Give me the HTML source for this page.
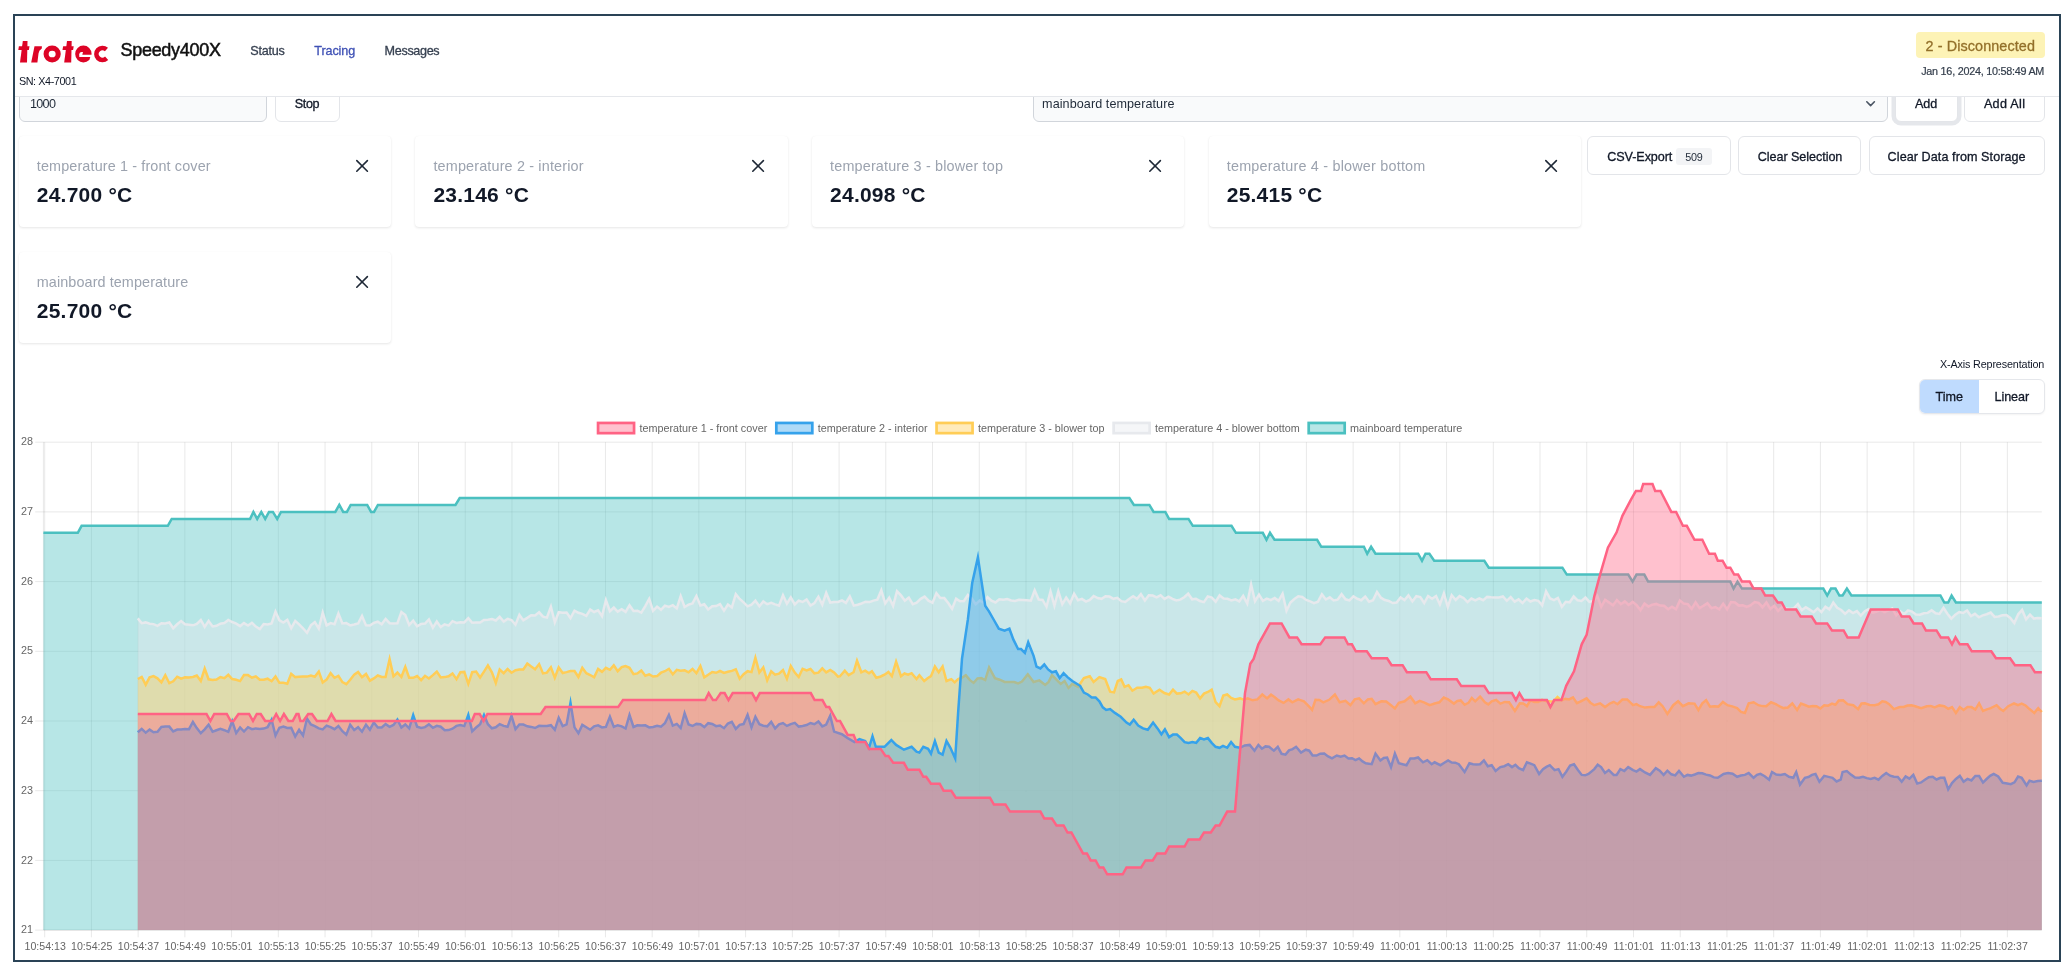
<!DOCTYPE html>
<html><head><meta charset="utf-8"><title>Speedy400X - Tracing</title>
<style>
html,body{margin:0;padding:0;background:#fff;}
body{width:2068px;height:966px;position:relative;overflow:hidden;font-family:"Liberation Sans",sans-serif;}
.t{position:absolute;white-space:nowrap;font-family:"Liberation Sans",sans-serif;}
#root{position:absolute;left:0;top:0;width:2068px;height:966px;will-change:transform;}
.abs{position:absolute;box-sizing:border-box;}
.frame{left:13px;top:14px;width:2048px;height:948px;border:2px solid #2a4356;}
.card{background:#fff;border-radius:4px;box-shadow:0 1px 2.5px rgba(0,0,0,0.10),0 0 1px rgba(0,0,0,0.05);}
.btn{background:#fff;border:1px solid #e3e5e9;border-radius:6px;}
.inp{background:#f9fafb;border:1px solid #d1d5db;border-radius:6px;}
</style></head><body><div id="root">
<div class="abs inp" style="left:18.5px;top:85px;width:248.5px;height:36.5px;"></div>
<div class="t" style="left:30.00px;top:91.53px;font-size:12.6px;line-height:25px;color:#1f2937;letter-spacing:-0.710px;">1000</div>
<div class="abs btn" style="left:275px;top:85px;width:64.5px;height:36.5px;"></div>
<div class="t" style="left:294.70px;top:91.53px;font-size:12.6px;line-height:25px;color:#111827;letter-spacing:-0.340px;-webkit-text-stroke:0.3px currentColor;">Stop</div>
<div class="abs inp" style="left:1032.5px;top:85px;width:855.5px;height:36.5px;"></div>
<div class="t" style="left:1042.10px;top:91.53px;font-size:12.6px;line-height:25px;color:#1f2937;letter-spacing:0.071px;">mainboard temperature</div>
<svg class="abs" style="left:1864px;top:99px" width="14" height="10" viewBox="0 0 14 10"><path d="M2.8 2.8 L6.6 6.6 L10.4 2.8" fill="none" stroke="#4b5563" stroke-width="1.6" stroke-linecap="round" stroke-linejoin="round"/></svg>
<div class="abs btn" style="left:1895px;top:85px;width:62.5px;height:36.5px;box-shadow:0 0 0 3.5px #e5e7eb;"></div>
<div class="t" style="left:1915.00px;top:91.53px;font-size:12.6px;line-height:25px;color:#111827;letter-spacing:-0.110px;-webkit-text-stroke:0.3px currentColor;">Add</div>
<div class="abs btn" style="left:1964px;top:85px;width:81px;height:36.5px;"></div>
<div class="t" style="left:1983.90px;top:91.53px;font-size:12.6px;line-height:25px;color:#111827;letter-spacing:0.312px;-webkit-text-stroke:0.3px currentColor;">Add All</div>
<div class="abs" style="left:15px;top:16px;width:2044px;height:80.5px;background:#fff;border-bottom:1px solid #e5e7eb;"></div>
<svg class="abs" style="left:0;top:0" width="130" height="80" viewBox="0 0 130 80"><polygon points="20.00,62.50 27.00,62.50 27.50,41.10 22.80,41.10" fill="#dd0426"/><polygon points="18.30,50.10 18.90,46.20 29.50,46.20 28.90,50.10" fill="#dd0426"/><polygon points="64.20,62.50 71.20,62.50 71.70,41.10 67.00,41.10" fill="#dd0426"/><polygon points="62.50,50.10 63.10,46.20 73.70,46.20 73.10,50.10" fill="#dd0426"/><polygon points="31.20,62.50 37.40,62.50 38.50,53.60 39.40,50.70 41.80,48.50 41.90,46.20 34.50,46.20" fill="#dd0426"/><ellipse cx="52.15" cy="53.98" rx="6.05" ry="5.9" fill="none" stroke="#dd0426" stroke-width="5.1"/><ellipse cx="83.4" cy="54.0" rx="8.2" ry="8.45" fill="#dd0426"/><polygon points="79.30,56.90 79.15,54.30 80.00,52.60 81.60,51.90 83.00,52.00 82.30,54.70 92.50,54.70 92.50,56.90" fill="#fff"/><polygon points="92.50,56.80 90.60,56.80 89.60,58.40 92.50,60.50" fill="#fff"/><path d="M106.63 58.35 A6.05 5.95 0 1 1 106.47 49.51" fill="none" stroke="#dd0426" stroke-width="4.7"/></svg>

<div class="t" style="left:120.50px;top:32.06px;font-size:18px;line-height:36px;color:#111111;letter-spacing:-0.299px;-webkit-text-stroke:0.5px currentColor;">Speedy400X</div>
<div class="t" style="left:250.20px;top:38.73px;font-size:12.6px;line-height:25px;color:#374151;letter-spacing:-0.204px;-webkit-text-stroke:0.3px currentColor;">Status</div>
<div class="t" style="left:314.30px;top:38.73px;font-size:12.6px;line-height:25px;color:#3f51b5;letter-spacing:-0.108px;-webkit-text-stroke:0.3px currentColor;">Tracing</div>
<div class="t" style="left:384.60px;top:38.73px;font-size:12.6px;line-height:25px;color:#374151;letter-spacing:-0.332px;-webkit-text-stroke:0.3px currentColor;">Messages</div>
<div class="t" style="left:18.90px;top:69.66px;font-size:10.8px;line-height:22px;color:#111827;letter-spacing:-0.404px;">SN: X4-7001</div>
<div class="abs" style="left:1916px;top:32.2px;width:129px;height:25.6px;background:#fdf3b6;border-radius:4px;"></div>
<div class="t" style="left:1925.60px;top:31.91px;font-size:14.4px;line-height:29px;color:#93702a;letter-spacing:0.089px;-webkit-text-stroke:0.3px currentColor;">2 - Disconnected</div>
<div class="t" style="left:1921.20px;top:59.86px;font-size:10.8px;line-height:22px;color:#333d4b;letter-spacing:-0.246px;-webkit-text-stroke:0.2px currentColor;">Jan 16, 2024, 10:58:49 AM</div>
<div class="abs card" style="left:18.7px;top:136.2px;width:372.3px;height:91px;"></div>
<div class="t" style="left:36.80px;top:152.21px;font-size:14.4px;line-height:29px;color:#9ca3af;letter-spacing:0.131px;">temperature 1 - front cover</div>
<div class="t" style="left:36.80px;top:174.22px;font-size:21.0px;line-height:42px;color:#111827;letter-spacing:0.221px;font-weight:700;">24.700 °C</div>
<svg class="abs" style="left:353.5px;top:158.4px" width="16" height="16" viewBox="0 0 16 16"><path d="M2.8 2.6 L13.4 13.2 M13.4 2.6 L2.8 13.2" fill="none" stroke="#1f2937" stroke-width="1.6" stroke-linecap="round"/></svg>
<div class="abs card" style="left:415.3px;top:136.2px;width:372.3px;height:91px;"></div>
<div class="t" style="left:433.45px;top:152.21px;font-size:14.4px;line-height:29px;color:#9ca3af;letter-spacing:0.159px;">temperature 2 - interior</div>
<div class="t" style="left:433.45px;top:174.22px;font-size:21.0px;line-height:42px;color:#111827;letter-spacing:0.221px;font-weight:700;">23.146 °C</div>
<svg class="abs" style="left:750.1px;top:158.4px" width="16" height="16" viewBox="0 0 16 16"><path d="M2.8 2.6 L13.4 13.2 M13.4 2.6 L2.8 13.2" fill="none" stroke="#1f2937" stroke-width="1.6" stroke-linecap="round"/></svg>
<div class="abs card" style="left:812.0px;top:136.2px;width:372.3px;height:91px;"></div>
<div class="t" style="left:830.10px;top:152.21px;font-size:14.4px;line-height:29px;color:#9ca3af;letter-spacing:0.162px;">temperature 3 - blower top</div>
<div class="t" style="left:830.10px;top:174.22px;font-size:21.0px;line-height:42px;color:#111827;letter-spacing:0.221px;font-weight:700;">24.098 °C</div>
<svg class="abs" style="left:1146.8px;top:158.4px" width="16" height="16" viewBox="0 0 16 16"><path d="M2.8 2.6 L13.4 13.2 M13.4 2.6 L2.8 13.2" fill="none" stroke="#1f2937" stroke-width="1.6" stroke-linecap="round"/></svg>
<div class="abs card" style="left:1208.6px;top:136.2px;width:372.3px;height:91px;"></div>
<div class="t" style="left:1226.75px;top:152.21px;font-size:14.4px;line-height:29px;color:#9ca3af;letter-spacing:0.207px;">temperature 4 - blower bottom</div>
<div class="t" style="left:1226.75px;top:174.22px;font-size:21.0px;line-height:42px;color:#111827;letter-spacing:0.221px;font-weight:700;">25.415 °C</div>
<svg class="abs" style="left:1543.4px;top:158.4px" width="16" height="16" viewBox="0 0 16 16"><path d="M2.8 2.6 L13.4 13.2 M13.4 2.6 L2.8 13.2" fill="none" stroke="#1f2937" stroke-width="1.6" stroke-linecap="round"/></svg>
<div class="abs card" style="left:18.7px;top:252.1px;width:372.3px;height:91px;"></div>
<div class="t" style="left:36.80px;top:268.11px;font-size:14.4px;line-height:29px;color:#9ca3af;letter-spacing:0.090px;">mainboard temperature</div>
<div class="t" style="left:36.80px;top:290.12px;font-size:21.0px;line-height:42px;color:#111827;letter-spacing:0.221px;font-weight:700;">25.700 °C</div>
<svg class="abs" style="left:353.5px;top:274.3px" width="16" height="16" viewBox="0 0 16 16"><path d="M2.8 2.6 L13.4 13.2 M13.4 2.6 L2.8 13.2" fill="none" stroke="#1f2937" stroke-width="1.6" stroke-linecap="round"/></svg>
<div class="abs btn" style="left:1587.3px;top:136.2px;width:144.2px;height:39.2px;"></div>
<div class="t" style="left:1607.20px;top:145.33px;font-size:12.6px;line-height:25px;color:#111827;letter-spacing:-0.070px;-webkit-text-stroke:0.3px currentColor;">CSV-Export</div>
<div class="abs" style="left:1676.1px;top:147.8px;width:35.8px;height:17.4px;background:#f3f4f6;border-radius:3px;"></div>
<div class="t" style="left:1685.30px;top:146.16px;font-size:10.8px;line-height:22px;color:#1f2937;letter-spacing:-0.310px;">509</div>
<div class="abs btn" style="left:1738px;top:136.2px;width:122.8px;height:39.2px;"></div>
<div class="t" style="left:1757.80px;top:145.33px;font-size:12.6px;line-height:25px;color:#111827;letter-spacing:-0.060px;-webkit-text-stroke:0.3px currentColor;">Clear Selection</div>
<div class="abs btn" style="left:1869px;top:136.2px;width:175.8px;height:39.2px;"></div>
<div class="t" style="left:1887.60px;top:145.33px;font-size:12.6px;line-height:25px;color:#111827;letter-spacing:0.070px;-webkit-text-stroke:0.3px currentColor;">Clear Data from Storage</div>
<div class="t" style="left:1939.90px;top:353.06px;font-size:10.8px;line-height:22px;color:#111827;letter-spacing:-0.148px;">X-Axis Representation</div>
<div class="abs" style="left:1918.7px;top:378.5px;width:126.3px;height:35.8px;border:1px solid #e5e7eb;border-radius:6px;background:#fff;overflow:hidden;box-shadow:0 1px 2px rgba(0,0,0,0.05);"><div style="position:absolute;left:-1px;top:-1px;width:60.3px;height:36px;background:#bfdbfe;"></div></div>
<div class="t" style="left:1935.60px;top:384.53px;font-size:12.6px;line-height:25px;color:#111827;letter-spacing:-0.011px;-webkit-text-stroke:0.3px currentColor;">Time</div>
<div class="t" style="left:1994.60px;top:384.53px;font-size:12.6px;line-height:25px;color:#111827;letter-spacing:-0.105px;-webkit-text-stroke:0.3px currentColor;">Linear</div>
<svg class="abs" style="left:0;top:0" width="2068" height="966" viewBox="0 0 2068 966" font-family="Liberation Sans, sans-serif">
<path d="M44.70 442.2 V937.3 M91.40 442.2 V937.3 M138.13 442.2 V937.3 M184.86 442.2 V937.3 M231.59 442.2 V937.3 M278.32 442.2 V937.3 M325.05 442.2 V937.3 M371.78 442.2 V937.3 M418.51 442.2 V937.3 M465.24 442.2 V937.3 M511.97 442.2 V937.3 M558.70 442.2 V937.3 M605.43 442.2 V937.3 M652.16 442.2 V937.3 M698.89 442.2 V937.3 M745.62 442.2 V937.3 M792.35 442.2 V937.3 M839.08 442.2 V937.3 M885.81 442.2 V937.3 M932.54 442.2 V937.3 M979.27 442.2 V937.3 M1026.00 442.2 V937.3 M1072.73 442.2 V937.3 M1119.46 442.2 V937.3 M1166.19 442.2 V937.3 M1212.92 442.2 V937.3 M1259.65 442.2 V937.3 M1306.38 442.2 V937.3 M1353.11 442.2 V937.3 M1399.84 442.2 V937.3 M1446.57 442.2 V937.3 M1493.30 442.2 V937.3 M1540.03 442.2 V937.3 M1586.76 442.2 V937.3 M1633.49 442.2 V937.3 M1680.22 442.2 V937.3 M1726.95 442.2 V937.3 M1773.68 442.2 V937.3 M1820.41 442.2 V937.3 M1867.14 442.2 V937.3 M1913.87 442.2 V937.3 M1960.60 442.2 V937.3 M2007.33 442.2 V937.3 M35.2 442.20 H2041.8 M35.2 511.90 H2041.8 M35.2 581.60 H2041.8 M35.2 651.30 H2041.8 M35.2 721.00 H2041.8 M35.2 790.70 H2041.8 M35.2 860.40 H2041.8 M35.2 930.10 H2041.8" stroke="rgba(0,0,0,0.1)" stroke-width="0.9" fill="none"/>
<path d="M43.4 442.2 V930.1 M43.4 930.1 H2041.8" stroke="rgba(0,0,0,0.1)" stroke-width="0.9" fill="none"/>
<clipPath id="ca"><rect x="42.1" y="440.9" width="2000.9999999999998" height="489.20000000000005"/></clipPath>
<g clip-path="url(#ca)">
<path d="M43.4 532.8 L77.8 532.8 L81.6 525.8 L167.8 525.8 L171.7 518.9 L250.1 518.9 L253.4 511.9 L257.2 518.9 L261.3 511.9 L265.2 518.9 L269.0 511.9 L272.9 511.9 L277.2 518.9 L281.0 511.9 L335.3 511.9 L339.3 504.9 L343.2 511.9 L346.9 511.9 L350.7 504.9 L367.2 504.9 L371.1 511.9 L374.0 511.9 L377.9 504.9 L440.0 504.9 L455.5 504.9 L459.7 498.0 L840.0 498.0 L1129.4 498.0 L1133.9 504.9 L1149.4 504.9 L1153.6 511.9 L1165.3 511.9 L1169.1 518.9 L1188.5 518.9 L1192.8 525.8 L1231.5 525.8 L1235.9 532.8 L1240.0 532.8 L1262.8 532.8 L1266.5 539.8 L1270.0 532.8 L1274.5 539.8 L1317.1 539.8 L1321.3 546.8 L1363.9 546.8 L1367.2 553.7 L1371.1 546.8 L1375.5 553.7 L1418.1 553.7 L1422.0 560.7 L1425.5 553.7 L1429.4 553.7 L1434.2 560.7 L1484.3 560.7 L1488.8 567.7 L1562.4 567.7 L1566.8 574.6 L1628.2 574.6 L1632.6 581.6 L1636.5 574.6 L1644.3 574.6 L1648.1 581.6 L1730.3 581.6 L1733.6 588.6 L1737.5 581.6 L1742.0 588.6 L1823.3 588.6 L1827.2 595.5 L1831.0 588.6 L1835.5 588.6 L1839.4 595.5 L1842.6 595.5 L1846.9 588.6 L1851.4 595.5 L1940.4 595.5 L1944.3 602.5 L1948.2 602.5 L1951.6 595.5 L1955.9 602.5 L2041.8 602.5 L2041.8 930.1 L43.4 930.1 Z" fill="rgba(75,192,192,0.4)" stroke="none"/>
<path d="M43.4 532.8 L77.8 532.8 L81.6 525.8 L167.8 525.8 L171.7 518.9 L250.1 518.9 L253.4 511.9 L257.2 518.9 L261.3 511.9 L265.2 518.9 L269.0 511.9 L272.9 511.9 L277.2 518.9 L281.0 511.9 L335.3 511.9 L339.3 504.9 L343.2 511.9 L346.9 511.9 L350.7 504.9 L367.2 504.9 L371.1 511.9 L374.0 511.9 L377.9 504.9 L440.0 504.9 L455.5 504.9 L459.7 498.0 L840.0 498.0 L1129.4 498.0 L1133.9 504.9 L1149.4 504.9 L1153.6 511.9 L1165.3 511.9 L1169.1 518.9 L1188.5 518.9 L1192.8 525.8 L1231.5 525.8 L1235.9 532.8 L1240.0 532.8 L1262.8 532.8 L1266.5 539.8 L1270.0 532.8 L1274.5 539.8 L1317.1 539.8 L1321.3 546.8 L1363.9 546.8 L1367.2 553.7 L1371.1 546.8 L1375.5 553.7 L1418.1 553.7 L1422.0 560.7 L1425.5 553.7 L1429.4 553.7 L1434.2 560.7 L1484.3 560.7 L1488.8 567.7 L1562.4 567.7 L1566.8 574.6 L1628.2 574.6 L1632.6 581.6 L1636.5 574.6 L1644.3 574.6 L1648.1 581.6 L1730.3 581.6 L1733.6 588.6 L1737.5 581.6 L1742.0 588.6 L1823.3 588.6 L1827.2 595.5 L1831.0 588.6 L1835.5 588.6 L1839.4 595.5 L1842.6 595.5 L1846.9 588.6 L1851.4 595.5 L1940.4 595.5 L1944.3 602.5 L1948.2 602.5 L1951.6 595.5 L1955.9 602.5 L2041.8 602.5" fill="none" stroke="rgb(75,192,192)" stroke-width="2.5" stroke-linejoin="miter" stroke-miterlimit="10" stroke-linecap="butt"/>
<path d="M137.8 618.4 L141.7 623.2 L145.7 622.4 L149.6 623.7 L153.5 624.1 L157.5 625.8 L161.4 623.3 L165.3 623.4 L169.3 622.4 L173.2 628.2 L177.2 624.3 L181.1 621.1 L185.0 624.2 L189.0 624.7 L192.9 625.3 L196.8 623.8 L200.8 620.0 L204.7 626.9 L208.6 620.9 L212.6 626.4 L216.5 625.8 L220.4 623.7 L224.4 623.1 L228.3 620.0 L232.2 622.0 L236.2 623.6 L240.1 626.1 L244.0 623.1 L248.0 625.5 L251.9 622.8 L255.8 626.6 L259.8 629.0 L263.7 624.0 L267.6 624.5 L271.6 623.5 L275.5 611.6 L279.4 620.3 L283.4 622.6 L287.3 619.8 L291.2 628.3 L295.2 620.9 L299.1 624.4 L303.0 628.3 L307.0 632.9 L310.9 625.3 L314.8 622.1 L318.8 628.5 L322.7 612.6 L326.6 625.3 L330.6 623.1 L334.5 624.3 L338.4 613.6 L342.4 623.5 L346.3 623.1 L350.2 625.4 L354.2 624.5 L358.1 623.5 L362.0 616.0 L366.0 625.4 L369.9 625.6 L373.8 623.0 L377.8 621.6 L381.7 624.2 L385.6 618.9 L389.6 623.2 L393.5 623.5 L397.4 623.2 L401.4 612.1 L405.3 615.1 L409.2 624.9 L413.2 620.7 L417.1 626.3 L421.1 624.0 L425.0 623.5 L428.9 619.5 L432.9 627.7 L436.8 621.6 L440.7 627.1 L444.7 624.3 L448.6 625.6 L452.5 621.2 L456.5 623.0 L460.4 622.3 L464.3 622.4 L468.3 618.1 L472.2 622.8 L476.1 622.5 L480.1 622.5 L484.0 619.9 L487.9 619.7 L491.9 619.1 L495.8 620.5 L499.7 616.9 L503.7 621.5 L507.6 618.9 L511.5 620.0 L515.5 624.7 L519.4 614.8 L523.3 620.4 L527.3 617.9 L531.2 615.3 L535.1 615.4 L539.1 612.3 L543.0 616.7 L546.9 617.6 L550.9 606.8 L554.8 622.3 L558.7 612.2 L562.7 612.7 L566.6 612.5 L570.5 618.2 L574.5 610.6 L578.4 612.8 L582.3 613.9 L586.3 615.8 L590.2 609.5 L594.1 612.0 L598.1 610.4 L602.0 616.2 L605.9 600.0 L609.9 611.2 L613.8 607.6 L617.7 611.6 L621.7 609.2 L625.6 611.9 L629.5 605.4 L633.5 611.0 L637.4 610.7 L641.3 612.7 L645.3 606.1 L649.2 599.0 L653.1 610.9 L657.1 606.6 L661.0 609.8 L664.9 605.6 L668.9 606.9 L672.8 605.2 L676.8 608.4 L680.7 596.1 L684.6 607.0 L688.6 604.6 L692.5 603.4 L696.4 596.1 L700.4 605.5 L704.3 604.2 L708.2 609.5 L712.2 606.3 L716.1 606.0 L720.0 604.1 L724.0 610.6 L727.9 604.6 L731.8 607.5 L735.8 594.2 L739.7 599.0 L743.6 602.4 L747.6 606.3 L751.5 604.6 L755.4 600.7 L759.4 606.2 L763.3 601.5 L767.2 604.2 L771.2 602.9 L775.1 604.4 L779.0 605.7 L783.0 595.2 L786.9 603.7 L790.8 597.5 L794.8 604.4 L798.7 600.7 L802.6 602.0 L806.6 599.5 L810.5 605.5 L814.4 603.1 L818.4 596.7 L822.3 604.6 L826.2 592.9 L830.2 602.6 L834.1 602.0 L838.0 602.0 L842.0 600.4 L845.9 602.9 L849.8 596.4 L853.8 605.6 L857.7 604.7 L861.6 603.5 L865.6 601.7 L869.5 602.1 L873.4 600.6 L877.4 599.6 L881.3 590.3 L885.2 603.4 L889.2 597.8 L893.1 605.9 L897.0 591.3 L901.0 595.4 L904.9 600.8 L908.8 597.6 L912.8 604.2 L916.7 602.6 L920.7 598.8 L924.6 596.6 L928.5 600.7 L932.5 602.7 L936.4 593.2 L940.3 598.1 L944.3 598.1 L948.2 603.0 L952.1 608.8 L956.1 598.6 L960.0 601.3 L963.9 601.0 L967.9 595.0 L971.8 598.6 L975.7 604.2 L979.7 600.6 L983.6 602.5 L987.5 597.1 L991.5 600.7 L995.4 602.5 L999.3 599.2 L1003.3 599.8 L1007.2 599.1 L1011.1 600.5 L1015.1 600.9 L1019.0 599.8 L1022.9 600.0 L1026.9 600.3 L1030.8 600.7 L1034.7 590.3 L1038.7 599.5 L1042.6 600.0 L1046.5 606.8 L1050.5 591.3 L1054.4 605.8 L1058.3 591.3 L1062.3 604.1 L1066.2 597.5 L1070.1 603.3 L1074.1 593.7 L1078.0 600.2 L1081.9 598.9 L1085.9 601.6 L1089.8 599.9 L1093.7 596.0 L1097.7 598.0 L1101.6 598.8 L1105.5 596.3 L1109.5 596.6 L1113.4 598.8 L1117.3 597.8 L1121.3 601.1 L1125.2 602.0 L1129.1 598.9 L1133.1 596.3 L1137.0 598.9 L1140.9 594.1 L1144.9 600.5 L1148.8 595.3 L1152.7 595.5 L1156.7 597.4 L1160.6 595.2 L1164.5 598.9 L1168.5 596.7 L1172.4 598.8 L1176.4 600.4 L1180.3 599.6 L1184.2 597.3 L1188.2 593.7 L1192.1 599.3 L1196.0 598.8 L1200.0 601.0 L1203.9 602.1 L1207.8 596.4 L1211.8 597.6 L1215.7 601.7 L1219.6 595.4 L1223.6 598.6 L1227.5 598.8 L1231.4 600.4 L1235.4 599.3 L1239.3 601.3 L1243.2 595.8 L1247.2 603.5 L1251.1 584.5 L1255.0 601.2 L1259.0 594.6 L1262.9 600.8 L1266.8 598.6 L1270.8 600.1 L1274.7 598.0 L1278.6 600.8 L1282.6 593.6 L1286.5 610.7 L1290.4 602.5 L1294.4 599.0 L1298.3 596.3 L1302.2 597.0 L1306.2 600.0 L1310.1 601.3 L1314.0 603.1 L1318.0 601.7 L1321.9 594.3 L1325.8 599.5 L1329.8 597.3 L1333.7 600.4 L1337.6 599.7 L1341.6 594.2 L1345.5 599.3 L1349.4 600.4 L1353.4 596.3 L1357.3 598.8 L1361.2 600.2 L1365.2 596.5 L1369.1 601.7 L1373.0 600.3 L1377.0 591.9 L1380.9 597.7 L1384.8 600.0 L1388.8 601.0 L1392.7 603.0 L1396.6 602.5 L1400.6 597.5 L1404.5 600.1 L1408.4 595.4 L1412.4 601.4 L1416.3 596.2 L1420.3 597.1 L1424.2 603.0 L1428.1 596.0 L1432.1 598.7 L1436.0 596.0 L1439.9 604.4 L1443.9 593.3 L1447.8 607.0 L1451.7 595.2 L1455.7 600.0 L1459.6 596.1 L1463.5 598.0 L1467.5 602.1 L1471.4 598.5 L1475.3 600.3 L1479.3 598.3 L1483.2 600.2 L1487.1 596.9 L1491.1 597.2 L1495.0 597.4 L1498.9 597.5 L1502.9 596.5 L1506.8 600.8 L1510.7 597.1 L1514.7 601.7 L1518.6 599.4 L1522.5 603.0 L1526.5 598.6 L1530.4 601.5 L1534.3 600.1 L1538.3 600.8 L1542.2 605.4 L1546.1 591.3 L1550.1 598.5 L1554.0 600.1 L1557.9 597.9 L1561.9 606.8 L1565.8 601.8 L1569.7 602.3 L1573.7 596.5 L1577.6 600.3 L1581.5 601.0 L1585.5 597.6 L1589.4 601.8 L1593.3 601.0 L1597.3 595.9 L1601.2 606.8 L1605.1 599.7 L1609.1 602.5 L1613.0 605.3 L1616.9 600.1 L1620.9 604.2 L1624.8 601.4 L1628.7 604.9 L1632.7 601.9 L1636.6 605.1 L1640.5 610.0 L1644.5 603.5 L1648.4 606.6 L1652.3 604.6 L1656.3 603.9 L1660.2 605.6 L1664.1 605.8 L1668.1 609.2 L1672.0 606.8 L1676.0 609.2 L1679.9 600.4 L1683.8 603.6 L1687.8 604.1 L1691.7 608.8 L1695.6 602.4 L1699.6 608.1 L1703.5 605.8 L1707.4 603.2 L1711.4 608.1 L1715.3 607.0 L1719.2 609.4 L1723.2 603.6 L1727.1 609.4 L1731.0 602.0 L1735.0 602.5 L1738.9 605.6 L1742.8 605.2 L1746.8 607.0 L1750.7 605.2 L1754.6 602.0 L1758.6 602.8 L1762.5 607.2 L1766.4 602.4 L1770.4 608.8 L1774.3 605.7 L1778.2 610.8 L1782.2 606.7 L1786.1 608.6 L1790.0 609.0 L1794.0 608.1 L1797.9 604.0 L1801.8 610.1 L1805.8 607.2 L1809.7 609.6 L1813.6 612.2 L1817.6 608.4 L1821.5 612.1 L1825.4 606.8 L1829.4 609.4 L1833.3 602.6 L1837.2 607.8 L1841.2 610.0 L1845.1 613.7 L1849.0 610.4 L1853.0 613.1 L1856.9 611.1 L1860.8 615.6 L1864.8 611.2 L1868.7 609.1 L1872.6 612.7 L1876.6 611.5 L1880.5 609.8 L1884.4 612.1 L1888.4 610.4 L1892.3 608.5 L1896.2 615.3 L1900.2 611.3 L1904.1 614.1 L1908.0 610.3 L1912.0 611.6 L1915.9 614.6 L1919.9 614.7 L1923.8 613.3 L1927.7 612.9 L1931.7 610.2 L1935.6 613.2 L1939.5 613.9 L1943.5 607.8 L1947.4 613.7 L1951.3 618.6 L1955.3 614.7 L1959.2 612.0 L1963.1 613.0 L1967.1 610.5 L1971.0 616.1 L1974.9 613.8 L1978.9 617.3 L1982.8 615.3 L1986.7 614.2 L1990.7 612.6 L1994.6 616.9 L1998.5 616.4 L2002.5 615.3 L2006.4 615.0 L2010.3 618.0 L2014.3 623.0 L2018.2 614.3 L2022.1 609.9 L2026.1 619.3 L2030.0 614.6 L2033.9 618.6 L2037.9 617.9 L2041.8 618.3 L2041.8 930.1 L137.8 930.1 Z" fill="rgba(231,233,237,0.4)" stroke="none"/>
<path d="M137.8 618.4 L141.7 623.2 L145.7 622.4 L149.6 623.7 L153.5 624.1 L157.5 625.8 L161.4 623.3 L165.3 623.4 L169.3 622.4 L173.2 628.2 L177.2 624.3 L181.1 621.1 L185.0 624.2 L189.0 624.7 L192.9 625.3 L196.8 623.8 L200.8 620.0 L204.7 626.9 L208.6 620.9 L212.6 626.4 L216.5 625.8 L220.4 623.7 L224.4 623.1 L228.3 620.0 L232.2 622.0 L236.2 623.6 L240.1 626.1 L244.0 623.1 L248.0 625.5 L251.9 622.8 L255.8 626.6 L259.8 629.0 L263.7 624.0 L267.6 624.5 L271.6 623.5 L275.5 611.6 L279.4 620.3 L283.4 622.6 L287.3 619.8 L291.2 628.3 L295.2 620.9 L299.1 624.4 L303.0 628.3 L307.0 632.9 L310.9 625.3 L314.8 622.1 L318.8 628.5 L322.7 612.6 L326.6 625.3 L330.6 623.1 L334.5 624.3 L338.4 613.6 L342.4 623.5 L346.3 623.1 L350.2 625.4 L354.2 624.5 L358.1 623.5 L362.0 616.0 L366.0 625.4 L369.9 625.6 L373.8 623.0 L377.8 621.6 L381.7 624.2 L385.6 618.9 L389.6 623.2 L393.5 623.5 L397.4 623.2 L401.4 612.1 L405.3 615.1 L409.2 624.9 L413.2 620.7 L417.1 626.3 L421.1 624.0 L425.0 623.5 L428.9 619.5 L432.9 627.7 L436.8 621.6 L440.7 627.1 L444.7 624.3 L448.6 625.6 L452.5 621.2 L456.5 623.0 L460.4 622.3 L464.3 622.4 L468.3 618.1 L472.2 622.8 L476.1 622.5 L480.1 622.5 L484.0 619.9 L487.9 619.7 L491.9 619.1 L495.8 620.5 L499.7 616.9 L503.7 621.5 L507.6 618.9 L511.5 620.0 L515.5 624.7 L519.4 614.8 L523.3 620.4 L527.3 617.9 L531.2 615.3 L535.1 615.4 L539.1 612.3 L543.0 616.7 L546.9 617.6 L550.9 606.8 L554.8 622.3 L558.7 612.2 L562.7 612.7 L566.6 612.5 L570.5 618.2 L574.5 610.6 L578.4 612.8 L582.3 613.9 L586.3 615.8 L590.2 609.5 L594.1 612.0 L598.1 610.4 L602.0 616.2 L605.9 600.0 L609.9 611.2 L613.8 607.6 L617.7 611.6 L621.7 609.2 L625.6 611.9 L629.5 605.4 L633.5 611.0 L637.4 610.7 L641.3 612.7 L645.3 606.1 L649.2 599.0 L653.1 610.9 L657.1 606.6 L661.0 609.8 L664.9 605.6 L668.9 606.9 L672.8 605.2 L676.8 608.4 L680.7 596.1 L684.6 607.0 L688.6 604.6 L692.5 603.4 L696.4 596.1 L700.4 605.5 L704.3 604.2 L708.2 609.5 L712.2 606.3 L716.1 606.0 L720.0 604.1 L724.0 610.6 L727.9 604.6 L731.8 607.5 L735.8 594.2 L739.7 599.0 L743.6 602.4 L747.6 606.3 L751.5 604.6 L755.4 600.7 L759.4 606.2 L763.3 601.5 L767.2 604.2 L771.2 602.9 L775.1 604.4 L779.0 605.7 L783.0 595.2 L786.9 603.7 L790.8 597.5 L794.8 604.4 L798.7 600.7 L802.6 602.0 L806.6 599.5 L810.5 605.5 L814.4 603.1 L818.4 596.7 L822.3 604.6 L826.2 592.9 L830.2 602.6 L834.1 602.0 L838.0 602.0 L842.0 600.4 L845.9 602.9 L849.8 596.4 L853.8 605.6 L857.7 604.7 L861.6 603.5 L865.6 601.7 L869.5 602.1 L873.4 600.6 L877.4 599.6 L881.3 590.3 L885.2 603.4 L889.2 597.8 L893.1 605.9 L897.0 591.3 L901.0 595.4 L904.9 600.8 L908.8 597.6 L912.8 604.2 L916.7 602.6 L920.7 598.8 L924.6 596.6 L928.5 600.7 L932.5 602.7 L936.4 593.2 L940.3 598.1 L944.3 598.1 L948.2 603.0 L952.1 608.8 L956.1 598.6 L960.0 601.3 L963.9 601.0 L967.9 595.0 L971.8 598.6 L975.7 604.2 L979.7 600.6 L983.6 602.5 L987.5 597.1 L991.5 600.7 L995.4 602.5 L999.3 599.2 L1003.3 599.8 L1007.2 599.1 L1011.1 600.5 L1015.1 600.9 L1019.0 599.8 L1022.9 600.0 L1026.9 600.3 L1030.8 600.7 L1034.7 590.3 L1038.7 599.5 L1042.6 600.0 L1046.5 606.8 L1050.5 591.3 L1054.4 605.8 L1058.3 591.3 L1062.3 604.1 L1066.2 597.5 L1070.1 603.3 L1074.1 593.7 L1078.0 600.2 L1081.9 598.9 L1085.9 601.6 L1089.8 599.9 L1093.7 596.0 L1097.7 598.0 L1101.6 598.8 L1105.5 596.3 L1109.5 596.6 L1113.4 598.8 L1117.3 597.8 L1121.3 601.1 L1125.2 602.0 L1129.1 598.9 L1133.1 596.3 L1137.0 598.9 L1140.9 594.1 L1144.9 600.5 L1148.8 595.3 L1152.7 595.5 L1156.7 597.4 L1160.6 595.2 L1164.5 598.9 L1168.5 596.7 L1172.4 598.8 L1176.4 600.4 L1180.3 599.6 L1184.2 597.3 L1188.2 593.7 L1192.1 599.3 L1196.0 598.8 L1200.0 601.0 L1203.9 602.1 L1207.8 596.4 L1211.8 597.6 L1215.7 601.7 L1219.6 595.4 L1223.6 598.6 L1227.5 598.8 L1231.4 600.4 L1235.4 599.3 L1239.3 601.3 L1243.2 595.8 L1247.2 603.5 L1251.1 584.5 L1255.0 601.2 L1259.0 594.6 L1262.9 600.8 L1266.8 598.6 L1270.8 600.1 L1274.7 598.0 L1278.6 600.8 L1282.6 593.6 L1286.5 610.7 L1290.4 602.5 L1294.4 599.0 L1298.3 596.3 L1302.2 597.0 L1306.2 600.0 L1310.1 601.3 L1314.0 603.1 L1318.0 601.7 L1321.9 594.3 L1325.8 599.5 L1329.8 597.3 L1333.7 600.4 L1337.6 599.7 L1341.6 594.2 L1345.5 599.3 L1349.4 600.4 L1353.4 596.3 L1357.3 598.8 L1361.2 600.2 L1365.2 596.5 L1369.1 601.7 L1373.0 600.3 L1377.0 591.9 L1380.9 597.7 L1384.8 600.0 L1388.8 601.0 L1392.7 603.0 L1396.6 602.5 L1400.6 597.5 L1404.5 600.1 L1408.4 595.4 L1412.4 601.4 L1416.3 596.2 L1420.3 597.1 L1424.2 603.0 L1428.1 596.0 L1432.1 598.7 L1436.0 596.0 L1439.9 604.4 L1443.9 593.3 L1447.8 607.0 L1451.7 595.2 L1455.7 600.0 L1459.6 596.1 L1463.5 598.0 L1467.5 602.1 L1471.4 598.5 L1475.3 600.3 L1479.3 598.3 L1483.2 600.2 L1487.1 596.9 L1491.1 597.2 L1495.0 597.4 L1498.9 597.5 L1502.9 596.5 L1506.8 600.8 L1510.7 597.1 L1514.7 601.7 L1518.6 599.4 L1522.5 603.0 L1526.5 598.6 L1530.4 601.5 L1534.3 600.1 L1538.3 600.8 L1542.2 605.4 L1546.1 591.3 L1550.1 598.5 L1554.0 600.1 L1557.9 597.9 L1561.9 606.8 L1565.8 601.8 L1569.7 602.3 L1573.7 596.5 L1577.6 600.3 L1581.5 601.0 L1585.5 597.6 L1589.4 601.8 L1593.3 601.0 L1597.3 595.9 L1601.2 606.8 L1605.1 599.7 L1609.1 602.5 L1613.0 605.3 L1616.9 600.1 L1620.9 604.2 L1624.8 601.4 L1628.7 604.9 L1632.7 601.9 L1636.6 605.1 L1640.5 610.0 L1644.5 603.5 L1648.4 606.6 L1652.3 604.6 L1656.3 603.9 L1660.2 605.6 L1664.1 605.8 L1668.1 609.2 L1672.0 606.8 L1676.0 609.2 L1679.9 600.4 L1683.8 603.6 L1687.8 604.1 L1691.7 608.8 L1695.6 602.4 L1699.6 608.1 L1703.5 605.8 L1707.4 603.2 L1711.4 608.1 L1715.3 607.0 L1719.2 609.4 L1723.2 603.6 L1727.1 609.4 L1731.0 602.0 L1735.0 602.5 L1738.9 605.6 L1742.8 605.2 L1746.8 607.0 L1750.7 605.2 L1754.6 602.0 L1758.6 602.8 L1762.5 607.2 L1766.4 602.4 L1770.4 608.8 L1774.3 605.7 L1778.2 610.8 L1782.2 606.7 L1786.1 608.6 L1790.0 609.0 L1794.0 608.1 L1797.9 604.0 L1801.8 610.1 L1805.8 607.2 L1809.7 609.6 L1813.6 612.2 L1817.6 608.4 L1821.5 612.1 L1825.4 606.8 L1829.4 609.4 L1833.3 602.6 L1837.2 607.8 L1841.2 610.0 L1845.1 613.7 L1849.0 610.4 L1853.0 613.1 L1856.9 611.1 L1860.8 615.6 L1864.8 611.2 L1868.7 609.1 L1872.6 612.7 L1876.6 611.5 L1880.5 609.8 L1884.4 612.1 L1888.4 610.4 L1892.3 608.5 L1896.2 615.3 L1900.2 611.3 L1904.1 614.1 L1908.0 610.3 L1912.0 611.6 L1915.9 614.6 L1919.9 614.7 L1923.8 613.3 L1927.7 612.9 L1931.7 610.2 L1935.6 613.2 L1939.5 613.9 L1943.5 607.8 L1947.4 613.7 L1951.3 618.6 L1955.3 614.7 L1959.2 612.0 L1963.1 613.0 L1967.1 610.5 L1971.0 616.1 L1974.9 613.8 L1978.9 617.3 L1982.8 615.3 L1986.7 614.2 L1990.7 612.6 L1994.6 616.9 L1998.5 616.4 L2002.5 615.3 L2006.4 615.0 L2010.3 618.0 L2014.3 623.0 L2018.2 614.3 L2022.1 609.9 L2026.1 619.3 L2030.0 614.6 L2033.9 618.6 L2037.9 617.9 L2041.8 618.3" fill="none" stroke="rgb(231,233,237)" stroke-width="2.5" stroke-linejoin="miter" stroke-miterlimit="10" stroke-linecap="butt"/>
<path d="M137.8 679.0 L141.7 677.0 L145.7 684.7 L149.6 677.3 L153.5 676.1 L157.5 678.3 L161.4 682.4 L165.3 675.2 L169.3 683.2 L173.2 681.3 L177.2 676.7 L181.1 678.7 L185.0 677.3 L189.0 677.4 L192.9 677.0 L196.8 675.5 L200.8 681.0 L204.7 668.7 L208.6 679.3 L212.6 680.1 L216.5 679.5 L220.4 677.1 L224.4 678.1 L228.3 674.8 L232.2 679.1 L236.2 679.7 L240.1 681.1 L244.0 675.1 L248.0 675.1 L251.9 677.7 L255.8 676.4 L259.8 679.7 L263.7 679.8 L267.6 678.7 L271.6 681.2 L275.5 676.4 L279.4 682.8 L283.4 682.7 L287.3 683.7 L291.2 673.8 L295.2 677.1 L299.1 676.8 L303.0 676.6 L307.0 676.6 L310.9 675.6 L314.8 676.8 L318.8 671.6 L322.7 682.5 L326.6 679.6 L330.6 673.1 L334.5 677.8 L338.4 675.8 L342.4 682.1 L346.3 684.2 L350.2 679.7 L354.2 674.6 L358.1 672.0 L362.0 677.2 L366.0 674.0 L369.9 680.7 L373.8 678.4 L377.8 675.5 L381.7 676.9 L385.6 677.0 L389.6 659.1 L393.5 676.3 L397.4 672.6 L401.4 677.0 L405.3 666.8 L409.2 677.8 L413.2 677.8 L417.1 676.0 L421.1 680.2 L425.0 675.8 L428.9 678.5 L432.9 675.1 L436.8 671.6 L440.7 677.5 L444.7 677.1 L448.6 676.3 L452.5 673.4 L456.5 679.1 L460.4 672.2 L464.3 671.9 L468.3 683.9 L472.2 672.2 L476.1 671.6 L480.1 677.5 L484.0 671.6 L487.9 665.5 L491.9 672.3 L495.8 682.9 L499.7 669.5 L503.7 673.2 L507.6 669.0 L511.5 672.7 L515.5 670.3 L519.4 669.6 L523.3 669.5 L527.3 663.6 L531.2 666.5 L535.1 669.2 L539.1 664.1 L543.0 673.4 L546.9 672.6 L550.9 667.3 L554.8 677.8 L558.7 667.4 L562.7 673.0 L566.6 672.1 L570.5 671.1 L574.5 671.0 L578.4 677.0 L582.3 667.7 L586.3 673.2 L590.2 675.0 L594.1 677.3 L598.1 668.9 L602.0 671.8 L605.9 667.8 L609.9 669.8 L613.8 665.4 L617.7 671.2 L621.7 667.1 L625.6 666.1 L629.5 667.8 L633.5 674.2 L637.4 673.4 L641.3 670.4 L645.3 675.8 L649.2 674.4 L653.1 676.5 L657.1 676.1 L661.0 672.7 L664.9 671.2 L668.9 668.8 L672.8 674.3 L676.8 669.8 L680.7 670.7 L684.6 670.3 L688.6 672.3 L692.5 669.0 L696.4 673.2 L700.4 666.1 L704.3 677.3 L708.2 674.7 L712.2 672.0 L716.1 672.8 L720.0 671.0 L724.0 672.9 L727.9 671.7 L731.8 670.9 L735.8 669.4 L739.7 678.7 L743.6 674.2 L747.6 671.2 L751.5 672.1 L755.4 657.8 L759.4 672.5 L763.3 667.4 L767.2 680.3 L771.2 671.3 L775.1 674.7 L779.0 673.7 L783.0 670.1 L786.9 678.8 L790.8 666.1 L794.8 672.6 L798.7 677.0 L802.6 668.8 L806.6 670.4 L810.5 669.0 L814.4 673.3 L818.4 672.7 L822.3 668.3 L826.2 672.3 L830.2 669.9 L834.1 672.5 L838.0 676.6 L840.0 676.2 L844.8 670.7 L848.7 675.2 L853.6 672.3 L857.0 660.7 L861.3 672.3 L865.2 670.7 L869.0 673.2 L871.9 671.3 L876.3 677.7 L880.7 676.5 L884.5 674.7 L888.4 671.9 L891.9 676.2 L896.1 661.6 L901.0 676.2 L904.5 673.5 L908.1 674.6 L911.6 673.2 L916.5 679.1 L919.4 675.2 L924.2 681.0 L927.6 678.2 L931.0 676.2 L934.9 666.5 L938.7 672.3 L942.6 666.5 L946.5 681.0 L951.3 679.1 L954.7 682.3 L958.1 679.1 L962.0 677.7 L965.8 675.2 L969.7 679.9 L973.6 682.9 L977.5 678.5 L981.3 678.1 L985.2 680.0 L989.1 667.4 L994.9 678.1 L999.7 679.7 L1004.6 682.0 L1009.4 682.0 L1014.2 682.0 L1018.1 683.4 L1022.0 681.6 L1027.8 674.2 L1033.6 682.0 L1039.4 680.4 L1045.2 684.9 L1048.6 681.9 L1052.0 675.2 L1056.4 679.6 L1060.7 683.9 L1064.6 681.0 L1068.5 688.0 L1072.3 683.9 L1078.1 686.8 L1083.9 678.1 L1089.8 676.2 L1093.6 682.0 L1099.4 677.1 L1105.2 679.1 L1110.1 691.6 L1114.0 692.4 L1117.8 681.0 L1121.2 679.5 L1124.6 686.8 L1128.5 685.2 L1132.4 690.7 L1137.2 687.8 L1142.0 687.8 L1145.9 686.9 L1149.8 687.8 L1153.6 693.6 L1159.5 689.7 L1164.3 693.0 L1169.1 694.5 L1173.0 689.7 L1176.9 693.6 L1180.8 693.3 L1184.6 691.6 L1188.5 694.5 L1192.4 690.9 L1196.2 692.6 L1200.1 698.4 L1204.0 693.6 L1207.9 692.0 L1211.7 689.7 L1215.6 702.1 L1219.5 706.2 L1223.3 695.5 L1227.2 694.5 L1231.1 698.0 L1235.0 699.4 L1240.0 698.4 L1243.9 699.6 L1247.7 698.4 L1252.6 700.3 L1257.4 699.4 L1262.3 694.5 L1267.1 698.4 L1271.0 694.7 L1274.8 697.3 L1278.7 700.4 L1283.6 702.9 L1288.4 699.4 L1292.3 702.3 L1298.1 699.4 L1303.9 701.3 L1308.7 706.2 L1312.1 709.9 L1315.5 699.8 L1319.4 699.9 L1323.3 702.3 L1329.1 699.8 L1334.9 694.5 L1339.7 702.3 L1345.5 700.9 L1350.4 705.2 L1354.7 699.4 L1359.1 698.4 L1363.9 703.3 L1367.8 699.4 L1371.7 698.8 L1375.5 704.2 L1381.3 701.3 L1386.2 701.4 L1391.0 705.2 L1394.9 708.4 L1398.8 702.9 L1404.6 701.3 L1410.4 696.5 L1415.2 703.3 L1419.6 700.8 L1423.9 702.3 L1429.7 705.2 L1434.6 703.5 L1439.4 702.3 L1443.8 697.5 L1448.1 699.4 L1453.9 703.6 L1457.3 700.9 L1460.7 700.4 L1464.6 704.8 L1468.5 702.9 L1471.8 697.9 L1475.2 701.3 L1480.1 696.5 L1484.9 702.3 L1488.3 704.4 L1491.7 701.3 L1496.1 699.9 L1500.4 703.6 L1504.8 701.9 L1509.1 702.3 L1514.9 711.0 L1519.8 703.3 L1523.3 703.4 L1526.9 706.2 L1530.4 700.4 L1534.3 702.0 L1538.2 701.9 L1542.0 699.8 L1545.9 700.9 L1549.8 701.3 L1553.6 701.4 L1557.5 697.0 L1561.4 700.4 L1565.3 698.9 L1569.1 699.4 L1573.0 697.4 L1576.9 703.2 L1580.8 701.3 L1586.6 698.4 L1590.4 702.7 L1594.3 705.2 L1600.1 703.3 L1605.0 707.1 L1609.8 703.6 L1613.7 701.8 L1617.5 704.2 L1622.4 699.6 L1627.2 699.4 L1633.0 705.2 L1636.5 704.1 L1640.0 706.2 L1645.0 707.6 L1650.0 707.1 L1654.4 707.0 L1658.7 702.3 L1662.6 706.2 L1667.4 713.9 L1673.2 705.2 L1678.1 701.3 L1682.9 706.2 L1688.7 703.3 L1694.5 703.6 L1698.4 710.0 L1702.3 703.3 L1706.1 700.2 L1710.0 706.7 L1713.9 706.2 L1718.4 706.6 L1722.9 702.0 L1727.4 705.2 L1732.3 706.4 L1737.1 708.1 L1741.0 711.9 L1744.9 712.9 L1748.7 703.3 L1753.6 702.3 L1758.4 705.2 L1762.3 706.1 L1766.2 706.2 L1771.0 702.3 L1775.8 704.2 L1779.7 706.4 L1783.6 708.1 L1787.9 707.5 L1792.3 703.3 L1797.1 710.0 L1801.0 703.5 L1804.9 705.0 L1808.8 706.7 L1812.6 706.0 L1816.5 706.2 L1820.4 708.5 L1824.2 705.2 L1828.1 705.7 L1832.0 703.6 L1835.4 704.8 L1838.8 700.4 L1843.1 700.3 L1847.5 704.2 L1853.3 705.2 L1858.1 709.1 L1861.5 703.5 L1864.9 703.3 L1869.7 704.9 L1874.6 705.2 L1878.5 704.3 L1882.3 701.3 L1885.7 701.9 L1889.1 704.2 L1893.9 709.1 L1899.8 707.1 L1903.6 706.9 L1907.5 705.5 L1911.4 705.3 L1915.2 706.2 L1921.1 708.1 L1926.9 706.2 L1930.7 705.9 L1934.6 707.5 L1939.4 705.4 L1944.3 706.2 L1948.2 708.8 L1952.0 707.1 L1955.9 712.9 L1959.8 707.1 L1963.6 710.0 L1967.5 707.0 L1971.4 707.1 L1975.3 709.6 L1979.1 703.3 L1983.0 711.0 L1986.9 709.3 L1990.8 708.1 L1996.6 705.2 L2000.0 708.7 L2003.3 711.0 L2008.2 706.2 L2014.0 703.3 L2017.9 705.2 L2021.7 703.6 L2025.6 705.5 L2029.5 709.1 L2034.3 712.9 L2038.2 708.1 L2041.8 712.0 L2041.8 930.1 L137.8 930.1 Z" fill="rgba(255,205,86,0.4)" stroke="none"/>
<path d="M137.8 679.0 L141.7 677.0 L145.7 684.7 L149.6 677.3 L153.5 676.1 L157.5 678.3 L161.4 682.4 L165.3 675.2 L169.3 683.2 L173.2 681.3 L177.2 676.7 L181.1 678.7 L185.0 677.3 L189.0 677.4 L192.9 677.0 L196.8 675.5 L200.8 681.0 L204.7 668.7 L208.6 679.3 L212.6 680.1 L216.5 679.5 L220.4 677.1 L224.4 678.1 L228.3 674.8 L232.2 679.1 L236.2 679.7 L240.1 681.1 L244.0 675.1 L248.0 675.1 L251.9 677.7 L255.8 676.4 L259.8 679.7 L263.7 679.8 L267.6 678.7 L271.6 681.2 L275.5 676.4 L279.4 682.8 L283.4 682.7 L287.3 683.7 L291.2 673.8 L295.2 677.1 L299.1 676.8 L303.0 676.6 L307.0 676.6 L310.9 675.6 L314.8 676.8 L318.8 671.6 L322.7 682.5 L326.6 679.6 L330.6 673.1 L334.5 677.8 L338.4 675.8 L342.4 682.1 L346.3 684.2 L350.2 679.7 L354.2 674.6 L358.1 672.0 L362.0 677.2 L366.0 674.0 L369.9 680.7 L373.8 678.4 L377.8 675.5 L381.7 676.9 L385.6 677.0 L389.6 659.1 L393.5 676.3 L397.4 672.6 L401.4 677.0 L405.3 666.8 L409.2 677.8 L413.2 677.8 L417.1 676.0 L421.1 680.2 L425.0 675.8 L428.9 678.5 L432.9 675.1 L436.8 671.6 L440.7 677.5 L444.7 677.1 L448.6 676.3 L452.5 673.4 L456.5 679.1 L460.4 672.2 L464.3 671.9 L468.3 683.9 L472.2 672.2 L476.1 671.6 L480.1 677.5 L484.0 671.6 L487.9 665.5 L491.9 672.3 L495.8 682.9 L499.7 669.5 L503.7 673.2 L507.6 669.0 L511.5 672.7 L515.5 670.3 L519.4 669.6 L523.3 669.5 L527.3 663.6 L531.2 666.5 L535.1 669.2 L539.1 664.1 L543.0 673.4 L546.9 672.6 L550.9 667.3 L554.8 677.8 L558.7 667.4 L562.7 673.0 L566.6 672.1 L570.5 671.1 L574.5 671.0 L578.4 677.0 L582.3 667.7 L586.3 673.2 L590.2 675.0 L594.1 677.3 L598.1 668.9 L602.0 671.8 L605.9 667.8 L609.9 669.8 L613.8 665.4 L617.7 671.2 L621.7 667.1 L625.6 666.1 L629.5 667.8 L633.5 674.2 L637.4 673.4 L641.3 670.4 L645.3 675.8 L649.2 674.4 L653.1 676.5 L657.1 676.1 L661.0 672.7 L664.9 671.2 L668.9 668.8 L672.8 674.3 L676.8 669.8 L680.7 670.7 L684.6 670.3 L688.6 672.3 L692.5 669.0 L696.4 673.2 L700.4 666.1 L704.3 677.3 L708.2 674.7 L712.2 672.0 L716.1 672.8 L720.0 671.0 L724.0 672.9 L727.9 671.7 L731.8 670.9 L735.8 669.4 L739.7 678.7 L743.6 674.2 L747.6 671.2 L751.5 672.1 L755.4 657.8 L759.4 672.5 L763.3 667.4 L767.2 680.3 L771.2 671.3 L775.1 674.7 L779.0 673.7 L783.0 670.1 L786.9 678.8 L790.8 666.1 L794.8 672.6 L798.7 677.0 L802.6 668.8 L806.6 670.4 L810.5 669.0 L814.4 673.3 L818.4 672.7 L822.3 668.3 L826.2 672.3 L830.2 669.9 L834.1 672.5 L838.0 676.6 L840.0 676.2 L844.8 670.7 L848.7 675.2 L853.6 672.3 L857.0 660.7 L861.3 672.3 L865.2 670.7 L869.0 673.2 L871.9 671.3 L876.3 677.7 L880.7 676.5 L884.5 674.7 L888.4 671.9 L891.9 676.2 L896.1 661.6 L901.0 676.2 L904.5 673.5 L908.1 674.6 L911.6 673.2 L916.5 679.1 L919.4 675.2 L924.2 681.0 L927.6 678.2 L931.0 676.2 L934.9 666.5 L938.7 672.3 L942.6 666.5 L946.5 681.0 L951.3 679.1 L954.7 682.3 L958.1 679.1 L962.0 677.7 L965.8 675.2 L969.7 679.9 L973.6 682.9 L977.5 678.5 L981.3 678.1 L985.2 680.0 L989.1 667.4 L994.9 678.1 L999.7 679.7 L1004.6 682.0 L1009.4 682.0 L1014.2 682.0 L1018.1 683.4 L1022.0 681.6 L1027.8 674.2 L1033.6 682.0 L1039.4 680.4 L1045.2 684.9 L1048.6 681.9 L1052.0 675.2 L1056.4 679.6 L1060.7 683.9 L1064.6 681.0 L1068.5 688.0 L1072.3 683.9 L1078.1 686.8 L1083.9 678.1 L1089.8 676.2 L1093.6 682.0 L1099.4 677.1 L1105.2 679.1 L1110.1 691.6 L1114.0 692.4 L1117.8 681.0 L1121.2 679.5 L1124.6 686.8 L1128.5 685.2 L1132.4 690.7 L1137.2 687.8 L1142.0 687.8 L1145.9 686.9 L1149.8 687.8 L1153.6 693.6 L1159.5 689.7 L1164.3 693.0 L1169.1 694.5 L1173.0 689.7 L1176.9 693.6 L1180.8 693.3 L1184.6 691.6 L1188.5 694.5 L1192.4 690.9 L1196.2 692.6 L1200.1 698.4 L1204.0 693.6 L1207.9 692.0 L1211.7 689.7 L1215.6 702.1 L1219.5 706.2 L1223.3 695.5 L1227.2 694.5 L1231.1 698.0 L1235.0 699.4 L1240.0 698.4 L1243.9 699.6 L1247.7 698.4 L1252.6 700.3 L1257.4 699.4 L1262.3 694.5 L1267.1 698.4 L1271.0 694.7 L1274.8 697.3 L1278.7 700.4 L1283.6 702.9 L1288.4 699.4 L1292.3 702.3 L1298.1 699.4 L1303.9 701.3 L1308.7 706.2 L1312.1 709.9 L1315.5 699.8 L1319.4 699.9 L1323.3 702.3 L1329.1 699.8 L1334.9 694.5 L1339.7 702.3 L1345.5 700.9 L1350.4 705.2 L1354.7 699.4 L1359.1 698.4 L1363.9 703.3 L1367.8 699.4 L1371.7 698.8 L1375.5 704.2 L1381.3 701.3 L1386.2 701.4 L1391.0 705.2 L1394.9 708.4 L1398.8 702.9 L1404.6 701.3 L1410.4 696.5 L1415.2 703.3 L1419.6 700.8 L1423.9 702.3 L1429.7 705.2 L1434.6 703.5 L1439.4 702.3 L1443.8 697.5 L1448.1 699.4 L1453.9 703.6 L1457.3 700.9 L1460.7 700.4 L1464.6 704.8 L1468.5 702.9 L1471.8 697.9 L1475.2 701.3 L1480.1 696.5 L1484.9 702.3 L1488.3 704.4 L1491.7 701.3 L1496.1 699.9 L1500.4 703.6 L1504.8 701.9 L1509.1 702.3 L1514.9 711.0 L1519.8 703.3 L1523.3 703.4 L1526.9 706.2 L1530.4 700.4 L1534.3 702.0 L1538.2 701.9 L1542.0 699.8 L1545.9 700.9 L1549.8 701.3 L1553.6 701.4 L1557.5 697.0 L1561.4 700.4 L1565.3 698.9 L1569.1 699.4 L1573.0 697.4 L1576.9 703.2 L1580.8 701.3 L1586.6 698.4 L1590.4 702.7 L1594.3 705.2 L1600.1 703.3 L1605.0 707.1 L1609.8 703.6 L1613.7 701.8 L1617.5 704.2 L1622.4 699.6 L1627.2 699.4 L1633.0 705.2 L1636.5 704.1 L1640.0 706.2 L1645.0 707.6 L1650.0 707.1 L1654.4 707.0 L1658.7 702.3 L1662.6 706.2 L1667.4 713.9 L1673.2 705.2 L1678.1 701.3 L1682.9 706.2 L1688.7 703.3 L1694.5 703.6 L1698.4 710.0 L1702.3 703.3 L1706.1 700.2 L1710.0 706.7 L1713.9 706.2 L1718.4 706.6 L1722.9 702.0 L1727.4 705.2 L1732.3 706.4 L1737.1 708.1 L1741.0 711.9 L1744.9 712.9 L1748.7 703.3 L1753.6 702.3 L1758.4 705.2 L1762.3 706.1 L1766.2 706.2 L1771.0 702.3 L1775.8 704.2 L1779.7 706.4 L1783.6 708.1 L1787.9 707.5 L1792.3 703.3 L1797.1 710.0 L1801.0 703.5 L1804.9 705.0 L1808.8 706.7 L1812.6 706.0 L1816.5 706.2 L1820.4 708.5 L1824.2 705.2 L1828.1 705.7 L1832.0 703.6 L1835.4 704.8 L1838.8 700.4 L1843.1 700.3 L1847.5 704.2 L1853.3 705.2 L1858.1 709.1 L1861.5 703.5 L1864.9 703.3 L1869.7 704.9 L1874.6 705.2 L1878.5 704.3 L1882.3 701.3 L1885.7 701.9 L1889.1 704.2 L1893.9 709.1 L1899.8 707.1 L1903.6 706.9 L1907.5 705.5 L1911.4 705.3 L1915.2 706.2 L1921.1 708.1 L1926.9 706.2 L1930.7 705.9 L1934.6 707.5 L1939.4 705.4 L1944.3 706.2 L1948.2 708.8 L1952.0 707.1 L1955.9 712.9 L1959.8 707.1 L1963.6 710.0 L1967.5 707.0 L1971.4 707.1 L1975.3 709.6 L1979.1 703.3 L1983.0 711.0 L1986.9 709.3 L1990.8 708.1 L1996.6 705.2 L2000.0 708.7 L2003.3 711.0 L2008.2 706.2 L2014.0 703.3 L2017.9 705.2 L2021.7 703.6 L2025.6 705.5 L2029.5 709.1 L2034.3 712.9 L2038.2 708.1 L2041.8 712.0" fill="none" stroke="rgb(255,205,86)" stroke-width="2.5" stroke-linejoin="miter" stroke-miterlimit="10" stroke-linecap="butt"/>
<path d="M137.8 732.2 L141.7 728.9 L145.7 732.7 L149.6 729.6 L153.5 732.3 L157.5 731.8 L161.4 727.0 L165.3 726.5 L169.3 726.6 L173.2 731.5 L177.2 729.6 L181.1 729.6 L185.0 729.0 L189.0 729.2 L192.9 722.0 L196.8 728.1 L200.8 733.2 L204.7 729.3 L208.6 724.6 L212.6 731.6 L216.5 730.2 L220.4 728.9 L224.4 730.2 L228.3 731.8 L232.2 721.3 L236.2 733.1 L240.1 727.5 L244.0 731.5 L248.0 727.2 L251.9 729.2 L255.8 728.4 L259.8 729.0 L263.7 728.6 L267.6 727.2 L271.6 719.7 L275.5 735.5 L279.4 727.7 L283.4 726.6 L287.3 728.0 L291.2 727.7 L295.2 736.5 L299.1 729.8 L303.0 735.5 L307.0 718.5 L310.9 724.4 L314.8 726.1 L318.8 728.4 L322.7 729.4 L326.6 725.6 L330.6 727.1 L334.5 729.2 L338.4 726.0 L342.4 731.2 L346.3 734.6 L350.2 724.8 L354.2 730.0 L358.1 727.2 L362.0 731.7 L366.0 724.7 L369.9 729.7 L373.8 722.5 L377.8 727.5 L381.7 727.4 L385.6 724.1 L389.6 726.8 L393.5 724.9 L397.4 719.7 L401.4 727.5 L405.3 724.4 L409.2 728.3 L413.2 715.2 L417.1 726.7 L421.1 727.9 L425.0 727.1 L428.9 724.4 L432.9 727.8 L436.8 725.8 L440.7 726.7 L444.7 730.3 L448.6 730.1 L452.5 728.7 L456.5 725.9 L460.4 725.0 L464.3 726.1 L468.3 714.9 L472.2 731.3 L476.1 727.5 L480.1 724.3 L484.0 714.9 L487.9 724.2 L491.9 728.3 L495.8 727.3 L499.7 724.1 L503.7 725.9 L507.6 726.8 L511.5 715.8 L515.5 729.1 L519.4 724.5 L523.3 724.5 L527.3 726.3 L531.2 726.9 L535.1 728.0 L539.1 725.8 L543.0 726.1 L546.9 725.9 L550.9 725.2 L554.8 729.8 L558.7 717.8 L562.7 726.1 L566.6 724.4 L570.5 702.9 L574.5 727.4 L578.4 733.3 L582.3 724.9 L586.3 727.3 L590.2 729.7 L594.1 726.3 L598.1 725.4 L602.0 727.4 L605.9 726.9 L609.9 716.8 L613.8 726.9 L617.7 725.2 L621.7 726.3 L625.6 728.5 L629.5 714.9 L633.5 727.0 L637.4 725.3 L641.3 725.4 L645.3 725.3 L649.2 727.4 L653.1 727.0 L657.1 725.7 L661.0 726.6 L664.9 723.3 L668.9 714.9 L672.8 725.6 L676.8 723.9 L680.7 728.0 L684.6 713.3 L688.6 724.5 L692.5 726.0 L696.4 723.9 L700.4 724.3 L704.3 727.1 L708.2 723.2 L712.2 723.9 L716.1 726.2 L720.0 725.5 L724.0 728.2 L727.9 723.5 L731.8 721.9 L735.8 728.9 L739.7 724.8 L743.6 724.1 L747.6 714.9 L751.5 727.4 L755.4 716.8 L759.4 724.3 L763.3 725.7 L767.2 726.3 L771.2 721.9 L775.1 728.4 L779.0 724.3 L783.0 723.1 L786.9 725.9 L790.8 724.1 L794.8 722.8 L798.7 726.6 L802.6 725.9 L806.6 725.0 L810.5 723.0 L814.4 724.2 L818.4 721.5 L822.3 726.4 L826.2 724.6 L830.2 715.8 L834.1 731.6 L841.9 734.2 L847.7 738.1 L854.5 742.0 L859.4 739.1 L865.2 741.0 L869.0 747.8 L872.5 736.2 L875.8 746.8 L884.5 746.8 L891.3 740.0 L896.1 744.9 L903.9 749.7 L911.6 746.8 L916.5 751.7 L919.4 752.6 L923.3 746.8 L928.1 748.8 L931.0 753.6 L934.9 741.0 L938.7 752.6 L942.6 754.6 L946.5 741.0 L950.4 747.8 L955.2 758.4 L958.1 712.9 L962.0 658.7 L967.8 620.0 L972.2 583.0 L977.9 557.4 L985.2 605.8 L989.1 611.6 L993.9 620.0 L998.8 628.7 L1004.6 630.7 L1009.4 628.7 L1013.3 639.4 L1018.1 649.0 L1021.0 649.0 L1024.9 652.9 L1028.2 642.3 L1033.6 655.8 L1036.5 666.5 L1040.4 668.4 L1044.3 664.5 L1048.1 669.4 L1052.0 672.3 L1055.9 671.3 L1059.7 678.1 L1063.6 673.2 L1067.5 677.1 L1072.3 681.0 L1080.1 685.8 L1083.9 692.6 L1087.8 694.5 L1091.7 697.4 L1095.6 697.4 L1099.4 701.3 L1102.8 707.3 L1106.2 710.0 L1110.1 709.1 L1114.9 712.9 L1120.7 716.8 L1126.5 722.6 L1129.8 724.6 L1133.7 719.7 L1138.2 725.5 L1143.0 728.4 L1147.8 729.8 L1153.1 722.6 L1157.5 728.4 L1161.4 734.2 L1164.9 729.4 L1169.1 737.1 L1173.0 734.6 L1176.9 734.6 L1180.8 738.1 L1184.6 742.1 L1188.5 742.9 L1192.4 742.0 L1196.2 742.9 L1200.1 738.1 L1204.0 739.5 L1207.9 738.1 L1211.7 742.9 L1215.6 746.8 L1219.5 747.8 L1223.0 745.9 L1227.2 747.8 L1231.1 742.0 L1235.0 746.8 L1240.0 747.8 L1244.8 745.4 L1249.7 744.9 L1254.5 750.7 L1258.4 744.9 L1261.9 748.7 L1265.5 746.4 L1269.0 746.8 L1273.9 750.7 L1277.8 746.8 L1281.6 753.8 L1285.5 754.6 L1289.0 750.4 L1292.6 749.1 L1296.1 746.8 L1301.0 752.6 L1305.8 749.7 L1309.2 750.7 L1312.6 755.5 L1316.5 755.6 L1320.3 753.7 L1324.2 753.6 L1328.1 756.4 L1332.0 758.4 L1336.8 755.5 L1340.7 756.6 L1344.5 755.5 L1348.4 758.4 L1352.0 758.2 L1355.5 760.2 L1359.1 758.4 L1362.5 761.4 L1365.8 763.3 L1371.7 764.2 L1375.5 753.6 L1380.4 760.4 L1383.8 757.9 L1387.1 757.5 L1391.0 767.1 L1394.9 753.6 L1398.8 763.3 L1402.6 764.2 L1406.5 765.2 L1410.4 758.4 L1414.2 758.5 L1418.1 757.5 L1423.0 762.3 L1427.3 760.2 L1431.7 764.2 L1434.6 762.3 L1440.4 765.2 L1444.3 762.7 L1448.1 760.4 L1451.7 762.5 L1455.2 762.7 L1458.8 764.2 L1464.6 772.0 L1469.4 763.3 L1473.0 764.3 L1476.5 764.5 L1480.1 764.2 L1483.9 760.4 L1487.8 766.2 L1491.7 765.2 L1495.6 771.0 L1500.4 767.1 L1504.3 766.2 L1508.2 764.2 L1512.0 767.1 L1515.4 764.8 L1518.8 768.1 L1523.1 770.1 L1526.9 762.3 L1530.6 763.7 L1534.3 765.2 L1539.1 773.9 L1543.0 769.1 L1546.4 766.9 L1549.8 765.2 L1554.6 770.1 L1558.5 769.1 L1562.4 776.8 L1566.2 771.7 L1570.1 765.6 L1574.0 764.2 L1577.9 769.9 L1581.7 774.9 L1585.1 775.3 L1588.5 773.9 L1594.3 769.1 L1597.7 764.7 L1601.1 767.1 L1605.0 773.0 L1608.8 770.1 L1613.7 774.9 L1616.6 774.9 L1620.4 769.1 L1624.3 771.0 L1628.2 767.1 L1633.0 770.1 L1636.5 771.6 L1640.0 769.1 L1645.0 772.5 L1650.0 774.9 L1655.8 768.1 L1659.7 770.6 L1663.6 774.9 L1667.4 770.7 L1671.3 774.3 L1675.2 775.4 L1679.0 771.0 L1683.9 776.8 L1687.5 774.9 L1691.1 775.6 L1694.8 774.5 L1698.4 773.0 L1702.3 773.3 L1706.1 774.6 L1710.0 775.5 L1713.9 777.4 L1717.8 777.8 L1723.6 773.9 L1728.1 773.1 L1732.6 773.8 L1737.1 776.8 L1741.0 775.5 L1744.9 774.9 L1748.7 773.0 L1753.6 777.8 L1757.0 774.8 L1760.4 773.9 L1764.7 776.2 L1769.1 779.7 L1772.0 772.0 L1776.2 774.6 L1780.5 775.0 L1784.8 774.0 L1789.0 776.8 L1793.3 777.8 L1796.2 772.0 L1800.0 784.6 L1804.9 777.8 L1808.4 777.0 L1812.0 774.9 L1815.5 773.9 L1819.4 781.7 L1824.2 775.9 L1828.4 776.9 L1832.5 777.8 L1836.6 781.5 L1840.7 779.7 L1842.6 772.0 L1846.8 771.0 L1850.9 774.6 L1855.0 777.6 L1859.1 777.8 L1863.0 776.8 L1866.8 778.1 L1870.7 778.9 L1874.6 777.9 L1878.5 779.7 L1882.3 775.9 L1886.2 773.0 L1890.1 775.7 L1893.9 776.8 L1897.8 777.0 L1901.7 781.7 L1905.6 776.4 L1909.4 778.6 L1913.3 774.9 L1917.2 783.6 L1921.1 782.4 L1924.9 779.7 L1928.8 777.2 L1932.7 776.8 L1936.5 779.5 L1940.4 777.8 L1944.3 777.8 L1948.2 789.4 L1952.0 783.1 L1955.9 778.9 L1959.8 775.9 L1963.6 781.7 L1967.5 778.9 L1971.4 780.4 L1975.3 775.9 L1979.1 776.0 L1983.0 782.6 L1986.6 779.0 L1990.1 775.8 L1993.7 773.9 L1998.2 776.5 L2002.7 782.8 L2007.2 783.6 L2010.8 784.2 L2014.5 782.4 L2018.1 776.6 L2021.7 777.8 L2026.6 785.5 L2029.5 780.7 L2033.6 781.9 L2037.7 781.0 L2041.8 780.7 L2041.8 930.1 L137.8 930.1 Z" fill="rgba(54,162,235,0.4)" stroke="none"/>
<path d="M137.8 732.2 L141.7 728.9 L145.7 732.7 L149.6 729.6 L153.5 732.3 L157.5 731.8 L161.4 727.0 L165.3 726.5 L169.3 726.6 L173.2 731.5 L177.2 729.6 L181.1 729.6 L185.0 729.0 L189.0 729.2 L192.9 722.0 L196.8 728.1 L200.8 733.2 L204.7 729.3 L208.6 724.6 L212.6 731.6 L216.5 730.2 L220.4 728.9 L224.4 730.2 L228.3 731.8 L232.2 721.3 L236.2 733.1 L240.1 727.5 L244.0 731.5 L248.0 727.2 L251.9 729.2 L255.8 728.4 L259.8 729.0 L263.7 728.6 L267.6 727.2 L271.6 719.7 L275.5 735.5 L279.4 727.7 L283.4 726.6 L287.3 728.0 L291.2 727.7 L295.2 736.5 L299.1 729.8 L303.0 735.5 L307.0 718.5 L310.9 724.4 L314.8 726.1 L318.8 728.4 L322.7 729.4 L326.6 725.6 L330.6 727.1 L334.5 729.2 L338.4 726.0 L342.4 731.2 L346.3 734.6 L350.2 724.8 L354.2 730.0 L358.1 727.2 L362.0 731.7 L366.0 724.7 L369.9 729.7 L373.8 722.5 L377.8 727.5 L381.7 727.4 L385.6 724.1 L389.6 726.8 L393.5 724.9 L397.4 719.7 L401.4 727.5 L405.3 724.4 L409.2 728.3 L413.2 715.2 L417.1 726.7 L421.1 727.9 L425.0 727.1 L428.9 724.4 L432.9 727.8 L436.8 725.8 L440.7 726.7 L444.7 730.3 L448.6 730.1 L452.5 728.7 L456.5 725.9 L460.4 725.0 L464.3 726.1 L468.3 714.9 L472.2 731.3 L476.1 727.5 L480.1 724.3 L484.0 714.9 L487.9 724.2 L491.9 728.3 L495.8 727.3 L499.7 724.1 L503.7 725.9 L507.6 726.8 L511.5 715.8 L515.5 729.1 L519.4 724.5 L523.3 724.5 L527.3 726.3 L531.2 726.9 L535.1 728.0 L539.1 725.8 L543.0 726.1 L546.9 725.9 L550.9 725.2 L554.8 729.8 L558.7 717.8 L562.7 726.1 L566.6 724.4 L570.5 702.9 L574.5 727.4 L578.4 733.3 L582.3 724.9 L586.3 727.3 L590.2 729.7 L594.1 726.3 L598.1 725.4 L602.0 727.4 L605.9 726.9 L609.9 716.8 L613.8 726.9 L617.7 725.2 L621.7 726.3 L625.6 728.5 L629.5 714.9 L633.5 727.0 L637.4 725.3 L641.3 725.4 L645.3 725.3 L649.2 727.4 L653.1 727.0 L657.1 725.7 L661.0 726.6 L664.9 723.3 L668.9 714.9 L672.8 725.6 L676.8 723.9 L680.7 728.0 L684.6 713.3 L688.6 724.5 L692.5 726.0 L696.4 723.9 L700.4 724.3 L704.3 727.1 L708.2 723.2 L712.2 723.9 L716.1 726.2 L720.0 725.5 L724.0 728.2 L727.9 723.5 L731.8 721.9 L735.8 728.9 L739.7 724.8 L743.6 724.1 L747.6 714.9 L751.5 727.4 L755.4 716.8 L759.4 724.3 L763.3 725.7 L767.2 726.3 L771.2 721.9 L775.1 728.4 L779.0 724.3 L783.0 723.1 L786.9 725.9 L790.8 724.1 L794.8 722.8 L798.7 726.6 L802.6 725.9 L806.6 725.0 L810.5 723.0 L814.4 724.2 L818.4 721.5 L822.3 726.4 L826.2 724.6 L830.2 715.8 L834.1 731.6 L841.9 734.2 L847.7 738.1 L854.5 742.0 L859.4 739.1 L865.2 741.0 L869.0 747.8 L872.5 736.2 L875.8 746.8 L884.5 746.8 L891.3 740.0 L896.1 744.9 L903.9 749.7 L911.6 746.8 L916.5 751.7 L919.4 752.6 L923.3 746.8 L928.1 748.8 L931.0 753.6 L934.9 741.0 L938.7 752.6 L942.6 754.6 L946.5 741.0 L950.4 747.8 L955.2 758.4 L958.1 712.9 L962.0 658.7 L967.8 620.0 L972.2 583.0 L977.9 557.4 L985.2 605.8 L989.1 611.6 L993.9 620.0 L998.8 628.7 L1004.6 630.7 L1009.4 628.7 L1013.3 639.4 L1018.1 649.0 L1021.0 649.0 L1024.9 652.9 L1028.2 642.3 L1033.6 655.8 L1036.5 666.5 L1040.4 668.4 L1044.3 664.5 L1048.1 669.4 L1052.0 672.3 L1055.9 671.3 L1059.7 678.1 L1063.6 673.2 L1067.5 677.1 L1072.3 681.0 L1080.1 685.8 L1083.9 692.6 L1087.8 694.5 L1091.7 697.4 L1095.6 697.4 L1099.4 701.3 L1102.8 707.3 L1106.2 710.0 L1110.1 709.1 L1114.9 712.9 L1120.7 716.8 L1126.5 722.6 L1129.8 724.6 L1133.7 719.7 L1138.2 725.5 L1143.0 728.4 L1147.8 729.8 L1153.1 722.6 L1157.5 728.4 L1161.4 734.2 L1164.9 729.4 L1169.1 737.1 L1173.0 734.6 L1176.9 734.6 L1180.8 738.1 L1184.6 742.1 L1188.5 742.9 L1192.4 742.0 L1196.2 742.9 L1200.1 738.1 L1204.0 739.5 L1207.9 738.1 L1211.7 742.9 L1215.6 746.8 L1219.5 747.8 L1223.0 745.9 L1227.2 747.8 L1231.1 742.0 L1235.0 746.8 L1240.0 747.8 L1244.8 745.4 L1249.7 744.9 L1254.5 750.7 L1258.4 744.9 L1261.9 748.7 L1265.5 746.4 L1269.0 746.8 L1273.9 750.7 L1277.8 746.8 L1281.6 753.8 L1285.5 754.6 L1289.0 750.4 L1292.6 749.1 L1296.1 746.8 L1301.0 752.6 L1305.8 749.7 L1309.2 750.7 L1312.6 755.5 L1316.5 755.6 L1320.3 753.7 L1324.2 753.6 L1328.1 756.4 L1332.0 758.4 L1336.8 755.5 L1340.7 756.6 L1344.5 755.5 L1348.4 758.4 L1352.0 758.2 L1355.5 760.2 L1359.1 758.4 L1362.5 761.4 L1365.8 763.3 L1371.7 764.2 L1375.5 753.6 L1380.4 760.4 L1383.8 757.9 L1387.1 757.5 L1391.0 767.1 L1394.9 753.6 L1398.8 763.3 L1402.6 764.2 L1406.5 765.2 L1410.4 758.4 L1414.2 758.5 L1418.1 757.5 L1423.0 762.3 L1427.3 760.2 L1431.7 764.2 L1434.6 762.3 L1440.4 765.2 L1444.3 762.7 L1448.1 760.4 L1451.7 762.5 L1455.2 762.7 L1458.8 764.2 L1464.6 772.0 L1469.4 763.3 L1473.0 764.3 L1476.5 764.5 L1480.1 764.2 L1483.9 760.4 L1487.8 766.2 L1491.7 765.2 L1495.6 771.0 L1500.4 767.1 L1504.3 766.2 L1508.2 764.2 L1512.0 767.1 L1515.4 764.8 L1518.8 768.1 L1523.1 770.1 L1526.9 762.3 L1530.6 763.7 L1534.3 765.2 L1539.1 773.9 L1543.0 769.1 L1546.4 766.9 L1549.8 765.2 L1554.6 770.1 L1558.5 769.1 L1562.4 776.8 L1566.2 771.7 L1570.1 765.6 L1574.0 764.2 L1577.9 769.9 L1581.7 774.9 L1585.1 775.3 L1588.5 773.9 L1594.3 769.1 L1597.7 764.7 L1601.1 767.1 L1605.0 773.0 L1608.8 770.1 L1613.7 774.9 L1616.6 774.9 L1620.4 769.1 L1624.3 771.0 L1628.2 767.1 L1633.0 770.1 L1636.5 771.6 L1640.0 769.1 L1645.0 772.5 L1650.0 774.9 L1655.8 768.1 L1659.7 770.6 L1663.6 774.9 L1667.4 770.7 L1671.3 774.3 L1675.2 775.4 L1679.0 771.0 L1683.9 776.8 L1687.5 774.9 L1691.1 775.6 L1694.8 774.5 L1698.4 773.0 L1702.3 773.3 L1706.1 774.6 L1710.0 775.5 L1713.9 777.4 L1717.8 777.8 L1723.6 773.9 L1728.1 773.1 L1732.6 773.8 L1737.1 776.8 L1741.0 775.5 L1744.9 774.9 L1748.7 773.0 L1753.6 777.8 L1757.0 774.8 L1760.4 773.9 L1764.7 776.2 L1769.1 779.7 L1772.0 772.0 L1776.2 774.6 L1780.5 775.0 L1784.8 774.0 L1789.0 776.8 L1793.3 777.8 L1796.2 772.0 L1800.0 784.6 L1804.9 777.8 L1808.4 777.0 L1812.0 774.9 L1815.5 773.9 L1819.4 781.7 L1824.2 775.9 L1828.4 776.9 L1832.5 777.8 L1836.6 781.5 L1840.7 779.7 L1842.6 772.0 L1846.8 771.0 L1850.9 774.6 L1855.0 777.6 L1859.1 777.8 L1863.0 776.8 L1866.8 778.1 L1870.7 778.9 L1874.6 777.9 L1878.5 779.7 L1882.3 775.9 L1886.2 773.0 L1890.1 775.7 L1893.9 776.8 L1897.8 777.0 L1901.7 781.7 L1905.6 776.4 L1909.4 778.6 L1913.3 774.9 L1917.2 783.6 L1921.1 782.4 L1924.9 779.7 L1928.8 777.2 L1932.7 776.8 L1936.5 779.5 L1940.4 777.8 L1944.3 777.8 L1948.2 789.4 L1952.0 783.1 L1955.9 778.9 L1959.8 775.9 L1963.6 781.7 L1967.5 778.9 L1971.4 780.4 L1975.3 775.9 L1979.1 776.0 L1983.0 782.6 L1986.6 779.0 L1990.1 775.8 L1993.7 773.9 L1998.2 776.5 L2002.7 782.8 L2007.2 783.6 L2010.8 784.2 L2014.5 782.4 L2018.1 776.6 L2021.7 777.8 L2026.6 785.5 L2029.5 780.7 L2033.6 781.9 L2037.7 781.0 L2041.8 780.7" fill="none" stroke="rgb(54,162,235)" stroke-width="2.5" stroke-linejoin="miter" stroke-miterlimit="10" stroke-linecap="butt"/>
<path d="M137.8 714.0 L206.5 714.0 L210.4 721.0 L214.2 714.0 L226.8 714.0 L230.7 721.0 L233.6 721.0 L238.5 714.0 L249.1 714.0 L253.0 721.0 L256.8 714.0 L260.7 714.0 L265.2 721.0 L272.3 721.0 L276.2 714.0 L280.1 721.0 L283.9 714.0 L288.4 721.0 L292.7 721.0 L296.5 714.0 L298.5 714.0 L300.4 721.0 L303.3 721.0 L308.2 714.0 L312.0 714.0 L316.9 721.0 L327.5 721.0 L331.4 714.0 L335.6 721.0 L440.0 721.0 L471.9 721.0 L474.8 714.0 L479.7 714.0 L483.6 721.0 L487.4 714.0 L540.7 714.0 L545.5 707.1 L618.1 707.1 L623.0 700.1 L705.2 700.1 L708.7 693.1 L713.0 700.1 L715.9 700.1 L720.7 693.1 L724.6 693.1 L728.5 700.1 L732.7 693.1 L752.1 693.1 L756.0 700.1 L759.8 693.1 L810.8 693.1 L814.6 700.1 L822.4 700.1 L826.3 707.1 L829.2 707.1 L833.0 714.0 L836.9 721.0 L840.0 721.0 L847.7 734.9 L853.6 734.9 L856.5 741.9 L865.2 741.9 L869.0 748.9 L880.7 748.9 L885.5 755.9 L888.4 755.9 L893.2 762.8 L903.9 762.8 L907.8 769.8 L919.4 769.8 L923.3 776.8 L926.2 776.8 L931.0 783.7 L939.7 783.7 L943.6 790.7 L951.3 790.7 L955.8 797.7 L990.0 797.7 L993.9 804.6 L1005.5 804.6 L1010.0 811.6 L1040.4 811.6 L1044.3 818.6 L1052.0 818.6 L1056.5 825.5 L1063.6 825.5 L1067.5 832.5 L1071.4 832.5 L1083.0 853.4 L1086.9 853.4 L1090.7 860.4 L1095.6 860.4 L1099.4 867.4 L1103.3 867.4 L1107.2 874.3 L1122.7 874.3 L1126.5 867.4 L1141.1 867.4 L1145.5 860.4 L1152.7 860.4 L1157.1 853.4 L1165.3 853.4 L1169.1 846.5 L1184.6 846.5 L1188.5 839.5 L1199.7 839.5 L1204.0 832.5 L1210.8 832.5 L1215.6 825.5 L1219.5 825.5 L1227.2 811.6 L1235.0 811.6 L1241.0 739.8 L1245.0 693.1 L1250.3 663.8 L1253.6 659.0 L1258.4 644.3 L1270.0 623.4 L1281.6 623.4 L1289.4 637.4 L1297.1 637.4 L1301.6 644.3 L1320.3 644.3 L1325.2 637.4 L1344.5 637.4 L1348.0 644.3 L1351.9 644.3 L1355.8 651.3 L1366.8 651.3 L1371.7 658.3 L1387.1 658.3 L1391.6 665.2 L1402.6 665.2 L1406.9 672.2 L1426.3 672.2 L1430.7 679.2 L1456.8 679.2 L1461.3 686.1 L1484.3 686.1 L1488.8 693.1 L1512.0 693.1 L1515.9 700.1 L1519.4 693.1 L1523.6 700.1 L1546.9 700.1 L1550.4 707.1 L1554.2 700.1 L1561.4 700.1 L1566.2 685.8 L1574.0 671.3 L1581.7 644.3 L1586.6 634.9 L1594.3 596.2 L1600.1 574.6 L1607.9 547.7 L1616.6 532.3 L1622.4 515.8 L1631.1 499.4 L1635.9 491.0 L1641.0 491.0 L1643.2 484.0 L1652.5 484.0 L1655.2 491.0 L1660.5 491.0 L1671.3 511.9 L1676.1 511.9 L1682.9 525.8 L1686.8 525.8 L1694.5 539.8 L1702.3 539.8 L1709.1 553.7 L1714.9 553.7 L1717.8 560.7 L1722.6 560.7 L1726.5 567.7 L1730.3 567.7 L1734.2 574.6 L1738.1 574.6 L1742.0 581.6 L1749.7 581.6 L1753.6 588.6 L1761.3 588.6 L1765.2 595.5 L1772.9 595.5 L1777.8 602.5 L1781.7 602.5 L1785.5 609.5 L1796.2 609.5 L1800.6 616.5 L1811.7 616.5 L1816.1 623.4 L1827.2 623.4 L1832.0 630.4 L1843.6 630.4 L1847.5 637.4 L1858.7 637.4 L1870.7 609.5 L1897.8 609.5 L1901.7 616.5 L1909.4 616.5 L1913.7 623.4 L1922.0 623.4 L1925.9 630.4 L1936.5 630.4 L1940.8 637.4 L1948.2 637.4 L1952.0 644.3 L1955.5 637.4 L1959.8 644.3 L1967.5 644.3 L1971.8 651.3 L1991.3 651.3 L1996.0 658.3 L2010.1 658.3 L2015.0 665.2 L2030.4 665.2 L2034.9 672.2 L2041.8 672.2 L2041.8 930.1 L137.8 930.1 Z" fill="rgba(255,99,132,0.4)" stroke="none"/>
<path d="M137.8 714.0 L206.5 714.0 L210.4 721.0 L214.2 714.0 L226.8 714.0 L230.7 721.0 L233.6 721.0 L238.5 714.0 L249.1 714.0 L253.0 721.0 L256.8 714.0 L260.7 714.0 L265.2 721.0 L272.3 721.0 L276.2 714.0 L280.1 721.0 L283.9 714.0 L288.4 721.0 L292.7 721.0 L296.5 714.0 L298.5 714.0 L300.4 721.0 L303.3 721.0 L308.2 714.0 L312.0 714.0 L316.9 721.0 L327.5 721.0 L331.4 714.0 L335.6 721.0 L440.0 721.0 L471.9 721.0 L474.8 714.0 L479.7 714.0 L483.6 721.0 L487.4 714.0 L540.7 714.0 L545.5 707.1 L618.1 707.1 L623.0 700.1 L705.2 700.1 L708.7 693.1 L713.0 700.1 L715.9 700.1 L720.7 693.1 L724.6 693.1 L728.5 700.1 L732.7 693.1 L752.1 693.1 L756.0 700.1 L759.8 693.1 L810.8 693.1 L814.6 700.1 L822.4 700.1 L826.3 707.1 L829.2 707.1 L833.0 714.0 L836.9 721.0 L840.0 721.0 L847.7 734.9 L853.6 734.9 L856.5 741.9 L865.2 741.9 L869.0 748.9 L880.7 748.9 L885.5 755.9 L888.4 755.9 L893.2 762.8 L903.9 762.8 L907.8 769.8 L919.4 769.8 L923.3 776.8 L926.2 776.8 L931.0 783.7 L939.7 783.7 L943.6 790.7 L951.3 790.7 L955.8 797.7 L990.0 797.7 L993.9 804.6 L1005.5 804.6 L1010.0 811.6 L1040.4 811.6 L1044.3 818.6 L1052.0 818.6 L1056.5 825.5 L1063.6 825.5 L1067.5 832.5 L1071.4 832.5 L1083.0 853.4 L1086.9 853.4 L1090.7 860.4 L1095.6 860.4 L1099.4 867.4 L1103.3 867.4 L1107.2 874.3 L1122.7 874.3 L1126.5 867.4 L1141.1 867.4 L1145.5 860.4 L1152.7 860.4 L1157.1 853.4 L1165.3 853.4 L1169.1 846.5 L1184.6 846.5 L1188.5 839.5 L1199.7 839.5 L1204.0 832.5 L1210.8 832.5 L1215.6 825.5 L1219.5 825.5 L1227.2 811.6 L1235.0 811.6 L1241.0 739.8 L1245.0 693.1 L1250.3 663.8 L1253.6 659.0 L1258.4 644.3 L1270.0 623.4 L1281.6 623.4 L1289.4 637.4 L1297.1 637.4 L1301.6 644.3 L1320.3 644.3 L1325.2 637.4 L1344.5 637.4 L1348.0 644.3 L1351.9 644.3 L1355.8 651.3 L1366.8 651.3 L1371.7 658.3 L1387.1 658.3 L1391.6 665.2 L1402.6 665.2 L1406.9 672.2 L1426.3 672.2 L1430.7 679.2 L1456.8 679.2 L1461.3 686.1 L1484.3 686.1 L1488.8 693.1 L1512.0 693.1 L1515.9 700.1 L1519.4 693.1 L1523.6 700.1 L1546.9 700.1 L1550.4 707.1 L1554.2 700.1 L1561.4 700.1 L1566.2 685.8 L1574.0 671.3 L1581.7 644.3 L1586.6 634.9 L1594.3 596.2 L1600.1 574.6 L1607.9 547.7 L1616.6 532.3 L1622.4 515.8 L1631.1 499.4 L1635.9 491.0 L1641.0 491.0 L1643.2 484.0 L1652.5 484.0 L1655.2 491.0 L1660.5 491.0 L1671.3 511.9 L1676.1 511.9 L1682.9 525.8 L1686.8 525.8 L1694.5 539.8 L1702.3 539.8 L1709.1 553.7 L1714.9 553.7 L1717.8 560.7 L1722.6 560.7 L1726.5 567.7 L1730.3 567.7 L1734.2 574.6 L1738.1 574.6 L1742.0 581.6 L1749.7 581.6 L1753.6 588.6 L1761.3 588.6 L1765.2 595.5 L1772.9 595.5 L1777.8 602.5 L1781.7 602.5 L1785.5 609.5 L1796.2 609.5 L1800.6 616.5 L1811.7 616.5 L1816.1 623.4 L1827.2 623.4 L1832.0 630.4 L1843.6 630.4 L1847.5 637.4 L1858.7 637.4 L1870.7 609.5 L1897.8 609.5 L1901.7 616.5 L1909.4 616.5 L1913.7 623.4 L1922.0 623.4 L1925.9 630.4 L1936.5 630.4 L1940.8 637.4 L1948.2 637.4 L1952.0 644.3 L1955.5 637.4 L1959.8 644.3 L1967.5 644.3 L1971.8 651.3 L1991.3 651.3 L1996.0 658.3 L2010.1 658.3 L2015.0 665.2 L2030.4 665.2 L2034.9 672.2 L2041.8 672.2" fill="none" stroke="rgb(255,99,132)" stroke-width="2.5" stroke-linejoin="miter" stroke-miterlimit="10" stroke-linecap="butt"/>
</g>
<text x="33.1" y="445.30" font-size="10.8" fill="#666" text-anchor="end">28</text>
<text x="33.1" y="515.00" font-size="10.8" fill="#666" text-anchor="end">27</text>
<text x="33.1" y="584.70" font-size="10.8" fill="#666" text-anchor="end">26</text>
<text x="33.1" y="654.40" font-size="10.8" fill="#666" text-anchor="end">25</text>
<text x="33.1" y="724.10" font-size="10.8" fill="#666" text-anchor="end">24</text>
<text x="33.1" y="793.80" font-size="10.8" fill="#666" text-anchor="end">23</text>
<text x="33.1" y="863.50" font-size="10.8" fill="#666" text-anchor="end">22</text>
<text x="33.1" y="933.20" font-size="10.8" fill="#666" text-anchor="end">21</text>
<text x="45.20" y="949.5" font-size="10.6" fill="#666" text-anchor="middle">10:54:13</text>
<text x="91.70" y="949.5" font-size="10.6" fill="#666" text-anchor="middle">10:54:25</text>
<text x="138.43" y="949.5" font-size="10.6" fill="#666" text-anchor="middle">10:54:37</text>
<text x="185.16" y="949.5" font-size="10.6" fill="#666" text-anchor="middle">10:54:49</text>
<text x="231.89" y="949.5" font-size="10.6" fill="#666" text-anchor="middle">10:55:01</text>
<text x="278.62" y="949.5" font-size="10.6" fill="#666" text-anchor="middle">10:55:13</text>
<text x="325.35" y="949.5" font-size="10.6" fill="#666" text-anchor="middle">10:55:25</text>
<text x="372.08" y="949.5" font-size="10.6" fill="#666" text-anchor="middle">10:55:37</text>
<text x="418.81" y="949.5" font-size="10.6" fill="#666" text-anchor="middle">10:55:49</text>
<text x="465.54" y="949.5" font-size="10.6" fill="#666" text-anchor="middle">10:56:01</text>
<text x="512.27" y="949.5" font-size="10.6" fill="#666" text-anchor="middle">10:56:13</text>
<text x="559.00" y="949.5" font-size="10.6" fill="#666" text-anchor="middle">10:56:25</text>
<text x="605.73" y="949.5" font-size="10.6" fill="#666" text-anchor="middle">10:56:37</text>
<text x="652.46" y="949.5" font-size="10.6" fill="#666" text-anchor="middle">10:56:49</text>
<text x="699.19" y="949.5" font-size="10.6" fill="#666" text-anchor="middle">10:57:01</text>
<text x="745.92" y="949.5" font-size="10.6" fill="#666" text-anchor="middle">10:57:13</text>
<text x="792.65" y="949.5" font-size="10.6" fill="#666" text-anchor="middle">10:57:25</text>
<text x="839.38" y="949.5" font-size="10.6" fill="#666" text-anchor="middle">10:57:37</text>
<text x="886.11" y="949.5" font-size="10.6" fill="#666" text-anchor="middle">10:57:49</text>
<text x="932.84" y="949.5" font-size="10.6" fill="#666" text-anchor="middle">10:58:01</text>
<text x="979.57" y="949.5" font-size="10.6" fill="#666" text-anchor="middle">10:58:13</text>
<text x="1026.30" y="949.5" font-size="10.6" fill="#666" text-anchor="middle">10:58:25</text>
<text x="1073.03" y="949.5" font-size="10.6" fill="#666" text-anchor="middle">10:58:37</text>
<text x="1119.76" y="949.5" font-size="10.6" fill="#666" text-anchor="middle">10:58:49</text>
<text x="1166.49" y="949.5" font-size="10.6" fill="#666" text-anchor="middle">10:59:01</text>
<text x="1213.22" y="949.5" font-size="10.6" fill="#666" text-anchor="middle">10:59:13</text>
<text x="1259.95" y="949.5" font-size="10.6" fill="#666" text-anchor="middle">10:59:25</text>
<text x="1306.68" y="949.5" font-size="10.6" fill="#666" text-anchor="middle">10:59:37</text>
<text x="1353.41" y="949.5" font-size="10.6" fill="#666" text-anchor="middle">10:59:49</text>
<text x="1400.14" y="949.5" font-size="10.6" fill="#666" text-anchor="middle">11:00:01</text>
<text x="1446.87" y="949.5" font-size="10.6" fill="#666" text-anchor="middle">11:00:13</text>
<text x="1493.60" y="949.5" font-size="10.6" fill="#666" text-anchor="middle">11:00:25</text>
<text x="1540.33" y="949.5" font-size="10.6" fill="#666" text-anchor="middle">11:00:37</text>
<text x="1587.06" y="949.5" font-size="10.6" fill="#666" text-anchor="middle">11:00:49</text>
<text x="1633.79" y="949.5" font-size="10.6" fill="#666" text-anchor="middle">11:01:01</text>
<text x="1680.52" y="949.5" font-size="10.6" fill="#666" text-anchor="middle">11:01:13</text>
<text x="1727.25" y="949.5" font-size="10.6" fill="#666" text-anchor="middle">11:01:25</text>
<text x="1773.98" y="949.5" font-size="10.6" fill="#666" text-anchor="middle">11:01:37</text>
<text x="1820.71" y="949.5" font-size="10.6" fill="#666" text-anchor="middle">11:01:49</text>
<text x="1867.44" y="949.5" font-size="10.6" fill="#666" text-anchor="middle">11:02:01</text>
<text x="1914.17" y="949.5" font-size="10.6" fill="#666" text-anchor="middle">11:02:13</text>
<text x="1960.90" y="949.5" font-size="10.6" fill="#666" text-anchor="middle">11:02:25</text>
<text x="2007.63" y="949.5" font-size="10.6" fill="#666" text-anchor="middle">11:02:37</text>
<rect x="598.05" y="422.95" width="36.0" height="10.2" fill="rgba(255,99,132,0.4)" stroke="rgb(255,99,132)" stroke-width="2.7"/>
<text x="639.45" y="431.9" font-size="10.8" fill="#666">temperature 1 - front cover</text>
<rect x="776.31" y="422.95" width="36.0" height="10.2" fill="rgba(54,162,235,0.4)" stroke="rgb(54,162,235)" stroke-width="2.7"/>
<text x="817.71" y="431.9" font-size="10.8" fill="#666">temperature 2 - interior</text>
<rect x="936.56" y="422.95" width="36.0" height="10.2" fill="rgba(255,205,86,0.4)" stroke="rgb(255,205,86)" stroke-width="2.7"/>
<text x="977.96" y="431.9" font-size="10.8" fill="#666">temperature 3 - blower top</text>
<rect x="1113.62" y="422.95" width="36.0" height="10.2" fill="rgba(231,233,237,0.4)" stroke="rgb(231,233,237)" stroke-width="2.7"/>
<text x="1155.02" y="431.9" font-size="10.8" fill="#666">temperature 4 - blower bottom</text>
<rect x="1308.69" y="422.95" width="36.0" height="10.2" fill="rgba(75,192,192,0.4)" stroke="rgb(75,192,192)" stroke-width="2.7"/>
<text x="1350.09" y="431.9" font-size="10.8" fill="#666">mainboard temperature</text>
</svg>

<div class="abs frame"></div>
</div></body></html>
